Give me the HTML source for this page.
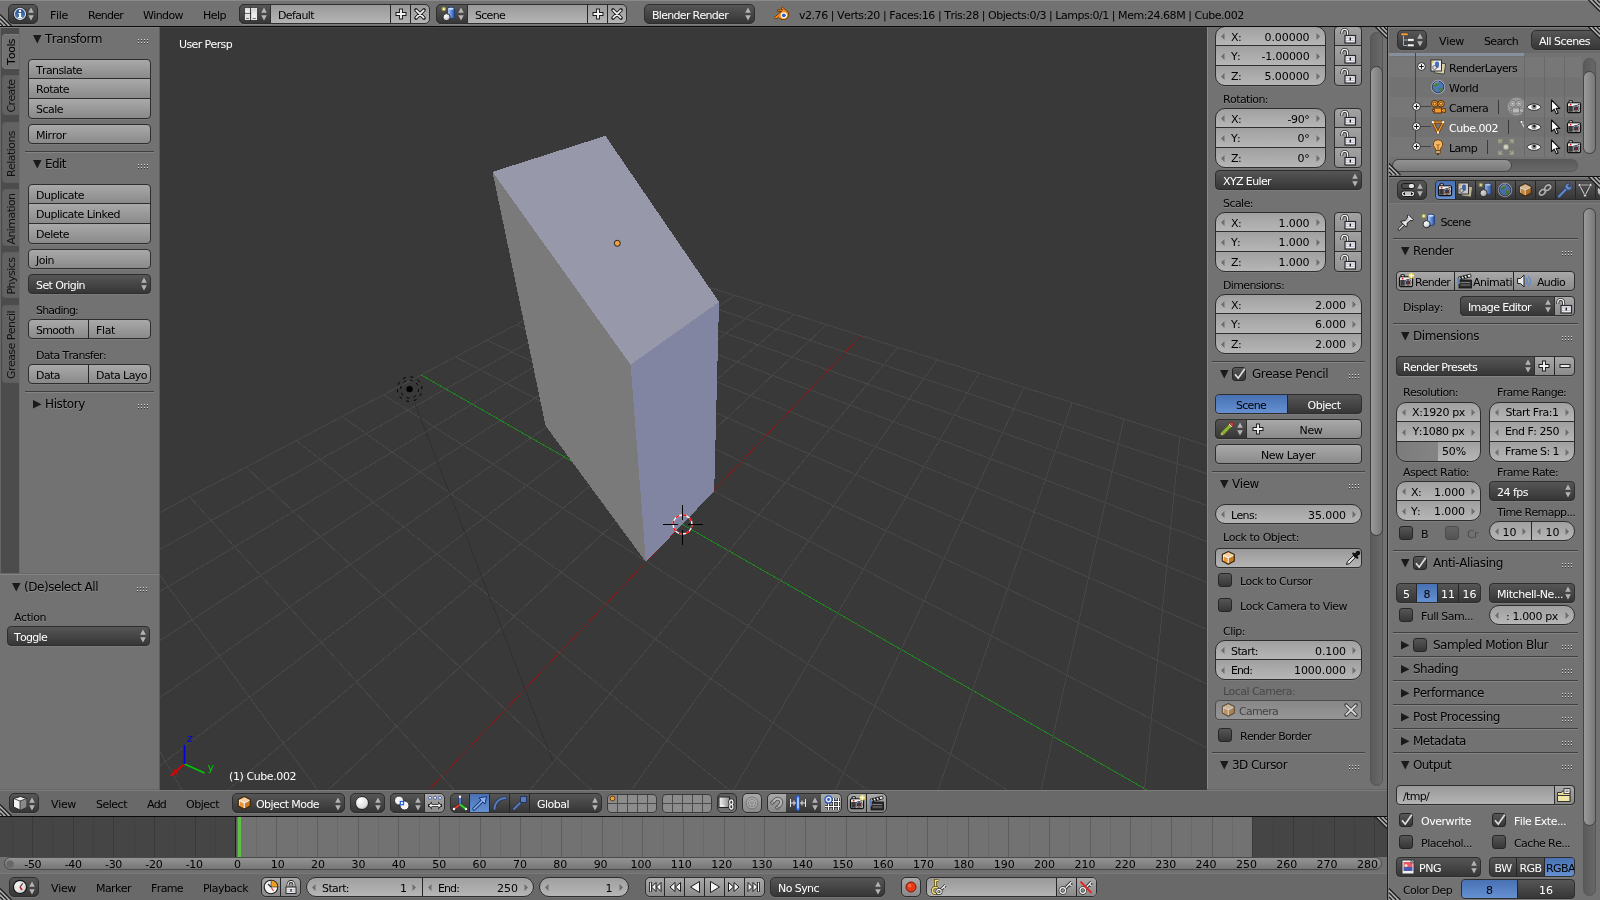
<!DOCTYPE html>
<html lang="en"><head><meta charset="utf-8"><title>Blender</title><style>
*{box-sizing:border-box;margin:0;padding:0}
html,body{width:1600px;height:900px;overflow:hidden;background:#727272}
body{position:relative;font-family:"DejaVu Sans","Liberation Sans",sans-serif;font-size:11px;color:#000;line-height:20px;font-kerning:none;font-variant-ligatures:none}
.a{position:absolute}
.t{position:absolute;white-space:nowrap;line-height:20px;height:20px}
.w{color:#fff}
.ts{text-shadow:0 1px 0 rgba(255,255,255,.18)}
.pt{font-size:12px}
.b{position:absolute;border:1px solid #2e2e2e;border-radius:4px;overflow:hidden;box-shadow:0 1px 0 rgba(255,255,255,.07)}
.tool{background:linear-gradient(#a9a9a9,#8a8a8a)}
.menu{background:linear-gradient(#565656,#363636);color:#fff}
.num{background:linear-gradient(#a0a0a0,#b6b6b6)}
.txt{background:linear-gradient(#999,#b4b4b4)}
.rad{background:linear-gradient(#565656,#363636);color:#fff}
.sel{background:linear-gradient(#4771b3,#6590d2);color:#000}
.togsel{background:linear-gradient(#8a8a8a,#a8a8a8)}
.tog{background:linear-gradient(#a2a2a2,#909090)}
.chk{position:absolute;width:14px;height:14px;border:1px solid #262626;border-radius:3px;background:linear-gradient(#565656,#363636)}
.sep{position:absolute;height:1px;background:#5f5f5f;border-bottom:0}
svg{position:absolute;overflow:visible}
#wrap{position:absolute;left:0;top:0;width:1600px;height:900px;overflow:hidden;will-change:transform}
</style></head><body><div id="wrap">
<div class="a" style="left:0px;top:0px;width:1600px;height:26px;background:#727272;"></div>
<div class="a" style="left:0px;top:0px;width:1600px;height:1px;background:#8a8a8a;"></div>
<div class="a" style="left:0px;top:26px;width:1600px;height:1px;background:#0a0a0a;"></div>
<div class="a" style="left:0px;top:27px;width:160px;height:763px;background:#727272;"></div>
<div class="a" style="left:0px;top:27px;width:160px;height:1px;background:#808080;"></div>
<div class="a" style="left:0px;top:28px;width:19px;height:546px;background:#4c4c4c;"></div>
<div class="a" style="left:0px;top:28px;width:1px;height:546px;background:#666;"></div>
<div class="a" style="left:1207px;top:27px;width:181px;height:762px;background:#727272;"></div>
<div class="a" style="left:1387px;top:27px;width:2px;height:873px;background:#1e1e1e;"></div>
<div class="a" style="left:1388px;top:27px;width:1px;height:873px;background:#838383;"></div>
<div class="a" style="left:0px;top:789px;width:1387px;height:1px;background:#666;"></div>
<div class="a" style="left:0px;top:790px;width:1387px;height:26px;background:#696969;"></div>
<div class="a" style="left:0px;top:790px;width:1387px;height:1px;background:#7c7c7c;"></div>
<div class="a" style="left:0px;top:816px;width:1387px;height:1px;background:#0a0a0a;"></div>
<div class="a" style="left:0px;top:817px;width:1387px;height:58px;background:#727272;"></div>
<div class="a" style="left:1389px;top:27px;width:211px;height:148px;background:#727272;"></div>
<div class="a" style="left:1389px;top:176px;width:211px;height:1px;background:#111;"></div>
<div class="a" style="left:1389px;top:177px;width:211px;height:723px;background:#727272;"></div>
<div class="b menu" style="left:8px;top:4px;width:30px;height:20px;border-radius:5px;"></div>
<svg style="left:12px;top:6px" width="16" height="16" viewBox="0 0 16 16"><defs><linearGradient id="ig" x1="0" y1="0" x2="0" y2="1"><stop offset="0" stop-color="#234a86"/><stop offset="1" stop-color="#5c86bc"/></linearGradient></defs><circle cx="8" cy="8" r="6.800" fill="#1c1c1c"/><circle cx="8" cy="8" r="5.600" fill="url(#ig)" stroke="#d4dcea" stroke-width="1.100"/><circle cx="8" cy="4.900" r="1.200" fill="#fff"/><path d="M6.300 7h2.800v4h1v1.200H6v-1.200h1.100V8.100H6.300z" fill="#fff"/></svg>
<svg style="left:26.5px;top:7px" width="8" height="14" viewBox="0 0 8 14"><path d="M4 .500 L6.800 5.800 L1.200 5.800Z M4 13.400 L6.800 8.200 L1.200 8.200Z" fill="#b4b4b4"/></svg>
<span class="t " style="top:5.5px;letter-spacing:-0.30px;left:50px;">File</span>
<span class="t " style="top:5.5px;letter-spacing:-0.78px;left:88px;">Render</span>
<span class="t " style="top:5.5px;letter-spacing:-0.60px;left:143px;">Window</span>
<span class="t " style="top:5.5px;letter-spacing:-0.52px;left:203px;">Help</span>
<div class="b txt" style="left:239px;top:4px;width:191px;height:20px;border-radius:5px;"></div>
<div class="b menu" style="left:239px;top:4px;width:32px;height:20px;border-radius:5px 0 0 5px;"></div>
<svg style="left:244px;top:7px" width="14" height="14" viewBox="0 0 14 14"><defs><linearGradient id="ssg" x1="0" y1="0" x2="0" y2="1"><stop offset="0" stop-color="#d2d2d2"/><stop offset="1" stop-color="#fff"/></linearGradient></defs><rect x=".3" y=".3" width="13.400" height="13.600" rx="1" fill="#1e1e1e"/><rect x="1.200" y="1.200" width="4.600" height="4.300" fill="url(#ssg)" stroke="#fff" stroke-width=".7"/><rect x="1.200" y="7" width="4.600" height="5.800" fill="url(#ssg)" stroke="#fff" stroke-width=".7"/><rect x="7.600" y="1.200" width="5.200" height="11.600" fill="url(#ssg)" stroke="#fff" stroke-width=".7"/><path d="M2 11.400h3M8.500 11.400h3.400" stroke="#444" stroke-width=".8"/></svg>
<svg style="left:259.5px;top:7px" width="8" height="14" viewBox="0 0 8 14"><path d="M4 .500 L6.800 5.800 L1.200 5.800Z M4 13.400 L6.800 8.200 L1.200 8.200Z" fill="#b4b4b4"/></svg>
<span class="t " style="top:5.5px;letter-spacing:-0.60px;left:278px;">Default</span>
<div class="a" style="left:390px;top:5px;width:1px;height:18px;background:#262626;"></div>
<div class="a" style="left:410px;top:5px;width:1px;height:18px;background:#262626;"></div>
<svg style="left:394px;top:7px" width="14" height="14" viewBox="0 0 14 14"><path d="M7 1.500v11M1.500 7h11" stroke="#1a1a1a" stroke-width="3.800"/><path d="M7 2.500v9M2.500 7h9" stroke="#f4f4f4" stroke-width="1.900"/></svg>
<svg style="left:413px;top:7px" width="14" height="14" viewBox="0 0 14 14"><path d="M3 3l8 8M11 3L3 11" stroke="#1a1a1a" stroke-width="3.600" stroke-linecap="round"/><path d="M3.300 3.300l7.400 7.400M10.700 3.300l-7.400 7.400" stroke="#f4f4f4" stroke-width="1.700" stroke-linecap="round"/></svg>
<div class="b txt" style="left:436px;top:4px;width:191px;height:20px;border-radius:5px;"></div>
<div class="b menu" style="left:436px;top:4px;width:32px;height:20px;border-radius:5px 0 0 5px;"></div>
<svg style="left:440px;top:6px" width="16" height="16" viewBox="0 0 16 16"><defs><radialGradient id="scs" cx=".35" cy=".3" r=".8"><stop offset="0" stop-color="#fff"/><stop offset=".6" stop-color="#d8d8d8"/><stop offset="1" stop-color="#777"/></radialGradient><linearGradient id="scc" x1="0" y1="0" x2="1" y2="0"><stop offset="0" stop-color="#c4dafa"/><stop offset=".45" stop-color="#6a98e4"/><stop offset="1" stop-color="#2c55a8"/></linearGradient></defs><circle cx="3.800" cy="3" r="2.300" fill="#c8c040" opacity=".7"/><circle cx="3.800" cy="3" r="1.100" fill="#fffbe0"/><path d="M7.600 2.700 a3.400 1.500 0 0 1 6.800 0 v8.300 a3.400 1.500 0 0 1 -6.800 0z" fill="url(#scc)" stroke="#1c3a7a" stroke-width=".9"/><ellipse cx="11" cy="2.800" rx="2.700" ry="1" fill="#cfe0fa"/><circle cx="6.600" cy="11.200" r="3.600" fill="url(#scs)" stroke="#222" stroke-width=".9"/></svg>
<svg style="left:456.5px;top:7px" width="8" height="14" viewBox="0 0 8 14"><path d="M4 .500 L6.800 5.800 L1.200 5.800Z M4 13.400 L6.800 8.200 L1.200 8.200Z" fill="#b4b4b4"/></svg>
<span class="t " style="top:5.5px;letter-spacing:-0.71px;left:475px;">Scene</span>
<div class="a" style="left:587px;top:5px;width:1px;height:18px;background:#262626;"></div>
<div class="a" style="left:607px;top:5px;width:1px;height:18px;background:#262626;"></div>
<svg style="left:591px;top:7px" width="14" height="14" viewBox="0 0 14 14"><path d="M7 1.500v11M1.500 7h11" stroke="#1a1a1a" stroke-width="3.800"/><path d="M7 2.500v9M2.500 7h9" stroke="#f4f4f4" stroke-width="1.900"/></svg>
<svg style="left:610px;top:7px" width="14" height="14" viewBox="0 0 14 14"><path d="M3 3l8 8M11 3L3 11" stroke="#1a1a1a" stroke-width="3.600" stroke-linecap="round"/><path d="M3.300 3.300l7.400 7.400M10.700 3.300l-7.400 7.400" stroke="#f4f4f4" stroke-width="1.700" stroke-linecap="round"/></svg>
<div class="b menu" style="left:644px;top:4px;width:111px;height:20px;border-radius:5px;"></div>
<span class="t w" style="top:5.5px;letter-spacing:-0.70px;left:652px;">Blender Render</span>
<svg style="left:743.5px;top:7px" width="8" height="14" viewBox="0 0 8 14"><path d="M4 .500 L6.800 5.800 L1.200 5.800Z M4 13.400 L6.800 8.200 L1.200 8.200Z" fill="#b4b4b4"/></svg>
<svg style="left:773px;top:6px" width="18" height="16" viewBox="0 0 18 16"><path d="M1 11.500 L8.5 5.5 L4.5 5.5 L4.5 3.8 L9.8 3.8 L8 2.2 L9.3 1 L15 6 A5.2 4.6 0 1 1 5.3 11.2 L3 13z" fill="#f08a1c" stroke="#6a3800" stroke-width=".9"/><circle cx="10.8" cy="9.3" r="3.1" fill="#fff"/><circle cx="10.8" cy="9.3" r="1.9" fill="#2a63b8"/></svg>
<span class="t " style="top:5.5px;letter-spacing:-0.46px;left:799px;">v2.76 | Verts:20 | Faces:16 | Tris:28 | Objects:0/3 | Lamps:0/1 | Mem:24.68M | Cube.002</span>
<div class="a" style="left:2px;top:34px;width:18px;height:35px;background:#727272;border:1px solid #7c7c7c;border-right:0;border-radius:4px 0 0 4px"></div>
<span class="t" style="left:-88px;top:41.5px;width:200px;text-align:center;transform:rotate(-90deg);transform-origin:50% 50%;color:#000;letter-spacing:-0.59px">Tools</span>
<div class="a" style="left:2px;top:75px;width:17px;height:40px;background:#626262;border:1px solid #5e5e5e;border-right:0;border-radius:4px 0 0 4px"></div>
<span class="t" style="left:-88px;top:86px;width:200px;text-align:center;transform:rotate(-90deg);transform-origin:50% 50%;color:#111;letter-spacing:-0.63px">Create</span>
<div class="a" style="left:2px;top:122px;width:17px;height:61px;background:#626262;border:1px solid #5e5e5e;border-right:0;border-radius:4px 0 0 4px"></div>
<span class="t" style="left:-88px;top:143.5px;width:200px;text-align:center;transform:rotate(-90deg);transform-origin:50% 50%;color:#111;letter-spacing:-0.56px">Relations</span>
<div class="a" style="left:2px;top:189px;width:17px;height:57px;background:#626262;border:1px solid #5e5e5e;border-right:0;border-radius:4px 0 0 4px"></div>
<span class="t" style="left:-88px;top:208.5px;width:200px;text-align:center;transform:rotate(-90deg);transform-origin:50% 50%;color:#111;letter-spacing:-0.56px">Animation</span>
<div class="a" style="left:2px;top:252px;width:17px;height:46px;background:#626262;border:1px solid #5e5e5e;border-right:0;border-radius:4px 0 0 4px"></div>
<span class="t" style="left:-88px;top:266px;width:200px;text-align:center;transform:rotate(-90deg);transform-origin:50% 50%;color:#111;letter-spacing:-0.53px">Physics</span>
<div class="a" style="left:2px;top:305px;width:17px;height:78px;background:#626262;border:1px solid #5e5e5e;border-right:0;border-radius:4px 0 0 4px"></div>
<span class="t" style="left:-88px;top:335px;width:200px;text-align:center;transform:rotate(-90deg);transform-origin:50% 50%;color:#111;letter-spacing:-0.54px">Grease Pencil</span>
<div class="a" style="left:19px;top:28px;width:1px;height:546px;background:#6a6a6a;"></div>
<svg style="left:33px;top:35px" width="9" height="9" viewBox="0 0 9 9"><path d="M0 0 L8.5 0 L4.25 8.5Z" fill="#1a1a1a"/></svg>
<span class="t pt ts" style="top:29px;letter-spacing:-0.52px;left:45px;">Transform</span>
<svg style="left:138px;top:39px" width="11" height="6" viewBox="0 0 11 6"><rect x="0" y="0" width="1" height="1" fill="#d8d8d8"/><rect x="0" y="1" width="1" height="1" fill="#3a3a3a"/><rect x="0" y="3" width="1" height="1" fill="#d8d8d8"/><rect x="0" y="4" width="1" height="1" fill="#3a3a3a"/><rect x="3" y="0" width="1" height="1" fill="#d8d8d8"/><rect x="3" y="1" width="1" height="1" fill="#3a3a3a"/><rect x="3" y="3" width="1" height="1" fill="#d8d8d8"/><rect x="3" y="4" width="1" height="1" fill="#3a3a3a"/><rect x="6" y="0" width="1" height="1" fill="#d8d8d8"/><rect x="6" y="1" width="1" height="1" fill="#3a3a3a"/><rect x="6" y="3" width="1" height="1" fill="#d8d8d8"/><rect x="6" y="4" width="1" height="1" fill="#3a3a3a"/><rect x="9" y="0" width="1" height="1" fill="#d8d8d8"/><rect x="9" y="1" width="1" height="1" fill="#3a3a3a"/><rect x="9" y="3" width="1" height="1" fill="#d8d8d8"/><rect x="9" y="4" width="1" height="1" fill="#3a3a3a"/></svg>
<div class="b tool" style="left:28px;top:59px;width:123px;height:20px;border-radius:4px 4px 0 0;"></div>
<span class="t " style="top:60.5px;letter-spacing:-0.62px;left:36px;">Translate</span>
<div class="b tool" style="left:28px;top:78px;width:123px;height:21px;border-radius:0 0 0 0;"></div>
<span class="t " style="top:79.5px;letter-spacing:-0.58px;left:36px;">Rotate</span>
<div class="b tool" style="left:28px;top:98px;width:123px;height:21px;border-radius:0 0 4px 4px;"></div>
<span class="t " style="top:99.5px;letter-spacing:-0.52px;left:36px;">Scale</span>
<div class="b tool" style="left:28px;top:124px;width:123px;height:20px;border-radius:4px 4px 4px 4px;"></div>
<span class="t " style="top:125.5px;letter-spacing:-0.47px;left:36px;">Mirror</span>
<div class="a" style="left:25px;top:151px;width:129px;height:1px;background:#404040;"></div>
<div class="a" style="left:25px;top:152px;width:129px;height:1px;background:#858585;"></div>
<svg style="left:33px;top:160px" width="9" height="9" viewBox="0 0 9 9"><path d="M0 0 L8.5 0 L4.25 8.5Z" fill="#1a1a1a"/></svg>
<span class="t pt ts" style="top:154px;letter-spacing:-0.56px;left:45px;">Edit</span>
<svg style="left:138px;top:164px" width="11" height="6" viewBox="0 0 11 6"><rect x="0" y="0" width="1" height="1" fill="#d8d8d8"/><rect x="0" y="1" width="1" height="1" fill="#3a3a3a"/><rect x="0" y="3" width="1" height="1" fill="#d8d8d8"/><rect x="0" y="4" width="1" height="1" fill="#3a3a3a"/><rect x="3" y="0" width="1" height="1" fill="#d8d8d8"/><rect x="3" y="1" width="1" height="1" fill="#3a3a3a"/><rect x="3" y="3" width="1" height="1" fill="#d8d8d8"/><rect x="3" y="4" width="1" height="1" fill="#3a3a3a"/><rect x="6" y="0" width="1" height="1" fill="#d8d8d8"/><rect x="6" y="1" width="1" height="1" fill="#3a3a3a"/><rect x="6" y="3" width="1" height="1" fill="#d8d8d8"/><rect x="6" y="4" width="1" height="1" fill="#3a3a3a"/><rect x="9" y="0" width="1" height="1" fill="#d8d8d8"/><rect x="9" y="1" width="1" height="1" fill="#3a3a3a"/><rect x="9" y="3" width="1" height="1" fill="#d8d8d8"/><rect x="9" y="4" width="1" height="1" fill="#3a3a3a"/></svg>
<div class="b tool" style="left:28px;top:184px;width:123px;height:20px;border-radius:4px 4px 0 0;"></div>
<span class="t " style="top:185.5px;letter-spacing:-0.49px;left:36px;">Duplicate</span>
<div class="b tool" style="left:28px;top:203px;width:123px;height:21px;border-radius:0 0 0 0;"></div>
<span class="t " style="top:204.5px;letter-spacing:-0.51px;left:36px;">Duplicate Linked</span>
<div class="b tool" style="left:28px;top:223px;width:123px;height:21px;border-radius:0 0 4px 4px;"></div>
<span class="t " style="top:224.5px;letter-spacing:-0.52px;left:36px;">Delete</span>
<div class="b tool" style="left:28px;top:249px;width:123px;height:20px;border-radius:4px 4px 4px 4px;"></div>
<span class="t " style="top:250.5px;letter-spacing:-0.50px;left:36px;">Join</span>
<div class="b menu" style="left:28px;top:274px;width:123px;height:20px;border-radius:4px 4px 4px 4px;"></div>
<span class="t w" style="top:275.5px;letter-spacing:-0.58px;left:36px;">Set Origin</span>
<svg style="left:139.5px;top:277px" width="8" height="14" viewBox="0 0 8 14"><path d="M4 .500 L6.800 5.800 L1.200 5.800Z M4 13.400 L6.800 8.200 L1.200 8.200Z" fill="#b4b4b4"/></svg>
<span class="t ts" style="top:301px;letter-spacing:-0.80px;left:36px;">Shading:</span>
<div class="b tool" style="left:28px;top:319px;width:123px;height:20px;"></div>
<div class="a" style="left:88px;top:320px;width:1px;height:18px;background:#262626;"></div>
<span class="t " style="top:320.5px;letter-spacing:-0.74px;left:36px;">Smooth</span>
<span class="t " style="top:320.5px;letter-spacing:-0.36px;left:96px;">Flat</span>
<span class="t ts" style="top:346px;letter-spacing:-0.67px;left:36px;">Data Transfer:</span>
<div class="b tool" style="left:28px;top:364px;width:123px;height:20px;"></div>
<div class="a" style="left:88px;top:365px;width:1px;height:18px;background:#262626;"></div>
<span class="t " style="top:365.5px;letter-spacing:-0.57px;left:36px;">Data</span>
<span class="t " style="top:365.5px;letter-spacing:-0.54px;left:96px;width:54px;overflow:hidden;">Data Layo</span>
<div class="a" style="left:25px;top:391px;width:129px;height:1px;background:#404040;"></div>
<div class="a" style="left:25px;top:392px;width:129px;height:1px;background:#858585;"></div>
<svg style="left:32.5px;top:400px" width="9" height="9" viewBox="0 0 9 9"><path d="M0 0 L8.500 4.250 L0 8.500Z" fill="#1a1a1a"/></svg>
<span class="t pt ts" style="top:394px;letter-spacing:-0.38px;left:45px;">History</span>
<svg style="left:138px;top:404px" width="11" height="6" viewBox="0 0 11 6"><rect x="0" y="0" width="1" height="1" fill="#d8d8d8"/><rect x="0" y="1" width="1" height="1" fill="#3a3a3a"/><rect x="0" y="3" width="1" height="1" fill="#d8d8d8"/><rect x="0" y="4" width="1" height="1" fill="#3a3a3a"/><rect x="3" y="0" width="1" height="1" fill="#d8d8d8"/><rect x="3" y="1" width="1" height="1" fill="#3a3a3a"/><rect x="3" y="3" width="1" height="1" fill="#d8d8d8"/><rect x="3" y="4" width="1" height="1" fill="#3a3a3a"/><rect x="6" y="0" width="1" height="1" fill="#d8d8d8"/><rect x="6" y="1" width="1" height="1" fill="#3a3a3a"/><rect x="6" y="3" width="1" height="1" fill="#d8d8d8"/><rect x="6" y="4" width="1" height="1" fill="#3a3a3a"/><rect x="9" y="0" width="1" height="1" fill="#d8d8d8"/><rect x="9" y="1" width="1" height="1" fill="#3a3a3a"/><rect x="9" y="3" width="1" height="1" fill="#d8d8d8"/><rect x="9" y="4" width="1" height="1" fill="#3a3a3a"/></svg>
<div class="a" style="left:0px;top:573px;width:159px;height:1px;background:#676767;"></div>
<div class="a" style="left:0px;top:574px;width:159px;height:1px;background:#858585;"></div>
<svg style="left:12px;top:583px" width="9" height="9" viewBox="0 0 9 9"><path d="M0 0 L8.5 0 L4.25 8.5Z" fill="#1a1a1a"/></svg>
<span class="t pt ts" style="top:577px;letter-spacing:-0.45px;left:24px;">(De)select All</span>
<svg style="left:137px;top:587px" width="11" height="6" viewBox="0 0 11 6"><rect x="0" y="0" width="1" height="1" fill="#d8d8d8"/><rect x="0" y="1" width="1" height="1" fill="#3a3a3a"/><rect x="0" y="3" width="1" height="1" fill="#d8d8d8"/><rect x="0" y="4" width="1" height="1" fill="#3a3a3a"/><rect x="3" y="0" width="1" height="1" fill="#d8d8d8"/><rect x="3" y="1" width="1" height="1" fill="#3a3a3a"/><rect x="3" y="3" width="1" height="1" fill="#d8d8d8"/><rect x="3" y="4" width="1" height="1" fill="#3a3a3a"/><rect x="6" y="0" width="1" height="1" fill="#d8d8d8"/><rect x="6" y="1" width="1" height="1" fill="#3a3a3a"/><rect x="6" y="3" width="1" height="1" fill="#d8d8d8"/><rect x="6" y="4" width="1" height="1" fill="#3a3a3a"/><rect x="9" y="0" width="1" height="1" fill="#d8d8d8"/><rect x="9" y="1" width="1" height="1" fill="#3a3a3a"/><rect x="9" y="3" width="1" height="1" fill="#d8d8d8"/><rect x="9" y="4" width="1" height="1" fill="#3a3a3a"/></svg>
<span class="t ts" style="top:608px;letter-spacing:-0.44px;left:14px;">Action</span>
<div class="b menu" style="left:7px;top:626px;width:143px;height:20px;"></div>
<span class="t w" style="top:627.5px;letter-spacing:-0.71px;left:14px;">Toggle</span>
<svg style="left:139px;top:629px" width="8" height="14" viewBox="0 0 8 14"><path d="M4 .500 L6.800 5.800 L1.200 5.800Z M4 13.400 L6.800 8.200 L1.200 8.200Z" fill="#b4b4b4"/></svg>
<div class="a" style="left:159px;top:27px;width:1px;height:763px;background:#5d5d5d;"></div>
<svg style="left:160px;top:27px;overflow:hidden;font-family:'DejaVu Sans','Liberation Sans',sans-serif" width="1047" height="763" viewBox="0 0 1047 763"><rect width="1047" height="763" fill="#393939"/><rect width="1047" height="1" fill="#464646"/><g stroke-width="1" shape-rendering="crispEdges"><line x1="473.2" y1="236.2" x2="1080.4" y2="429.1" stroke="#464646"/><line x1="473.2" y1="236.2" x2="-185.9" y2="583.3" stroke="#464646"/><line x1="452.9" y1="246.8" x2="1081.0" y2="458.3" stroke="#464646"/><line x1="496.6" y1="243.6" x2="-171.7" y2="618.7" stroke="#464646"/><line x1="431.3" y1="258.2" x2="1081.8" y2="491.1" stroke="#464646"/><line x1="521.2" y1="251.4" x2="-155.7" y2="658.1" stroke="#464646"/><line x1="408.1" y1="270.4" x2="1082.7" y2="528.2" stroke="#464646"/><line x1="547.2" y1="259.7" x2="-137.8" y2="702.5" stroke="#464646"/><line x1="383.1" y1="283.6" x2="1083.6" y2="570.5" stroke="#464646"/><line x1="574.6" y1="268.4" x2="-117.4" y2="752.8" stroke="#464646"/><line x1="356.2" y1="297.8" x2="1084.7" y2="619.2" stroke="#464646"/><line x1="603.6" y1="277.6" x2="-94.2" y2="810.3" stroke="#464646"/><line x1="327.1" y1="313.1" x2="1086.0" y2="675.7" stroke="#464646"/><line x1="634.2" y1="287.3" x2="-67.5" y2="876.5" stroke="#464646"/><line x1="295.4" y1="329.8" x2="1087.6" y2="742.2" stroke="#464646"/><line x1="666.7" y1="297.7" x2="-36.2" y2="953.7" stroke="#464646"/><line x1="261.0" y1="347.9" x2="1089.4" y2="821.6" stroke="#1e861e"/><line x1="701.3" y1="308.6" x2="0.6" y2="1044.9" stroke="#801c1c"/><line x1="223.4" y1="367.7" x2="1091.6" y2="918.0" stroke="#464646"/><line x1="738.0" y1="320.3" x2="44.8" y2="1154.2" stroke="#464646"/><line x1="182.0" y1="389.5" x2="1094.3" y2="1037.6" stroke="#464646"/><line x1="777.2" y1="332.8" x2="98.7" y2="1287.6" stroke="#464646"/><line x1="136.5" y1="413.5" x2="1097.8" y2="1189.8" stroke="#464646"/><line x1="819.1" y1="346.1" x2="165.9" y2="1454.0" stroke="#464646"/><line x1="86.0" y1="440.1" x2="1102.4" y2="1390.2" stroke="#464646"/><line x1="863.9" y1="360.3" x2="252.2" y2="1667.6" stroke="#464646"/><line x1="29.7" y1="469.8" x2="1108.8" y2="1665.8" stroke="#464646"/><line x1="912.0" y1="375.6" x2="367.0" y2="1951.6" stroke="#464646"/><line x1="-33.5" y1="503.0" x2="1118.0" y2="2068.8" stroke="#464646"/><line x1="963.9" y1="392.1" x2="527.1" y2="2347.7" stroke="#464646"/><line x1="-104.8" y1="540.6" x2="1132.9" y2="2714.3" stroke="#464646"/><line x1="1019.8" y1="409.8" x2="765.9" y2="2938.6" stroke="#464646"/><line x1="-185.9" y1="583.3" x2="1160.4" y2="3914.9" stroke="#464646"/><line x1="1080.4" y1="429.1" x2="1160.4" y2="3914.9" stroke="#464646"/></g><line x1="254.75" y1="375.5" x2="393.2" y2="735.5" stroke="#303030" stroke-width="1" shape-rendering="crispEdges"/><g shape-rendering="crispEdges"><polygon points="332.5,144.9 470.6,337.7 485.9,535.0 385.6,398.8" fill="#7a7a7a"/><polygon points="470.6,337.7 559.0,274.9 554.2,464.2 485.9,535.0" fill="#8285a1"/><polygon points="332.5,144.9 445.4,108.8 559.0,274.9 470.6,337.7" fill="#9798aa"/></g><circle cx="457.3" cy="216.3" r="3" fill="#f0a040" stroke="#222" stroke-width="1"/><circle cx="249.6" cy="362.1" r="3.2" fill="#000"/><circle cx="249.6" cy="362.1" r="9" fill="none" stroke="#000" stroke-width=".9" stroke-dasharray="3 4.07"/><circle cx="249.6" cy="362.1" r="12.3" fill="none" stroke="#000" stroke-width=".9" stroke-dasharray="3 4.73" transform="rotate(20 249.6 362.1)"/><circle cx="522.5" cy="497.5" r="9.5" fill="none" stroke="#fff" stroke-width="1.3"/><circle cx="522.5" cy="497.5" r="9.5" fill="none" stroke="#f00" stroke-width="1.3" stroke-dasharray="3.73 3.73"/><path d="M522.5 477.5v15M522.5 502.5v15M502.5 497.5h15M527.5 497.5h15" stroke="#000" stroke-width="1" shape-rendering="crispEdges"/><g stroke-width="1.7"><line x1="24.5" y1="737" x2="10.5" y2="749" stroke="#e00000"/><line x1="24.5" y1="737" x2="44.5" y2="746" stroke="#00c800"/><line x1="24.5" y1="737" x2="24.5" y2="718" stroke="#0000e0"/></g><text x="12.5" y="748" font-size="11" fill="#e00000">x</text><text x="47.5" y="744" font-size="11" fill="#00c800">y</text><text x="27" y="715" font-size="11" fill="#0000e0">z</text></svg>
<span class="t w" style="top:35px;letter-spacing:-0.62px;left:179px;">User Persp</span>
<span class="t w" style="top:767px;letter-spacing:-0.41px;left:229px;">(1) Cube.002</span>
<div class="b num" style="left:1215px;top:26px;width:111px;height:20px;border-radius:10px 10px 0 0;"></div>
<svg style="left:1221px;top:32.5px" width="4" height="7" viewBox="0 0 4 7"><path d="M3.5 0 L3.5 7 L0 3.5Z" fill="#6e6e6e"/></svg>
<svg style="left:1316px;top:32.5px" width="4" height="7" viewBox="0 0 4 7"><path d="M0.5 0 L0.5 7 L4 3.5Z" fill="#6e6e6e"/></svg>
<span class="t " style="top:27.5px;letter-spacing:-0.62px;left:1231px;">X:</span>
<span class="t n" style="top:27.5px;letter-spacing:-0.07px;right:290.5px;text-align:right;">0.00000</span>
<div class="b tog" style="left:1334px;top:26px;width:28px;height:20px;border-radius:4px 4px 0 0;"></div>
<svg style="left:1340px;top:28px" width="16" height="16" viewBox="0 0 16 16"><path d="M1.800 6 V4.300 A2.900 2.900 0 0 1 7.600 4.300 V8" fill="none" stroke="#2a2a2a" stroke-width="3"/><path d="M1.800 5.700 V4.300 A2.900 2.900 0 0 1 7.600 4.300 V8" fill="none" stroke="#f4f4f4" stroke-width="1.300"/><rect x="5" y="7.500" width="10.500" height="7.500" fill="#ececf0" stroke="#2a2a2a" stroke-width="1.200"/><path d="M6 10h8.500M6 12.500h8.500" stroke="#b4b8c6" stroke-width=".9"/><rect x="9.600" y="9.600" width="1.400" height="2.800" fill="#1a1a1a"/></svg>
<div class="b num" style="left:1215px;top:45px;width:111px;height:21px;border-radius:0 0 0 0;"></div>
<svg style="left:1221px;top:52.5px" width="4" height="7" viewBox="0 0 4 7"><path d="M3.5 0 L3.5 7 L0 3.5Z" fill="#6e6e6e"/></svg>
<svg style="left:1316px;top:52.5px" width="4" height="7" viewBox="0 0 4 7"><path d="M0.5 0 L0.5 7 L4 3.5Z" fill="#6e6e6e"/></svg>
<span class="t " style="top:46.5px;letter-spacing:-0.71px;left:1231px;">Y:</span>
<span class="t n" style="top:46.5px;letter-spacing:-0.18px;right:290.5px;text-align:right;">-1.00000</span>
<div class="b tog" style="left:1334px;top:45px;width:28px;height:21px;border-radius:0 0 0 0;"></div>
<svg style="left:1340px;top:48px" width="16" height="16" viewBox="0 0 16 16"><path d="M1.800 6 V4.300 A2.900 2.900 0 0 1 7.600 4.300 V8" fill="none" stroke="#2a2a2a" stroke-width="3"/><path d="M1.800 5.700 V4.300 A2.900 2.900 0 0 1 7.600 4.300 V8" fill="none" stroke="#f4f4f4" stroke-width="1.300"/><rect x="5" y="7.500" width="10.500" height="7.500" fill="#ececf0" stroke="#2a2a2a" stroke-width="1.200"/><path d="M6 10h8.500M6 12.500h8.500" stroke="#b4b8c6" stroke-width=".9"/><rect x="9.600" y="9.600" width="1.400" height="2.800" fill="#1a1a1a"/></svg>
<div class="b num" style="left:1215px;top:65px;width:111px;height:21px;border-radius:0 0 10px 10px;"></div>
<svg style="left:1221px;top:72.5px" width="4" height="7" viewBox="0 0 4 7"><path d="M3.5 0 L3.5 7 L0 3.5Z" fill="#6e6e6e"/></svg>
<svg style="left:1316px;top:72.5px" width="4" height="7" viewBox="0 0 4 7"><path d="M0.5 0 L0.5 7 L4 3.5Z" fill="#6e6e6e"/></svg>
<span class="t " style="top:66.5px;letter-spacing:-0.62px;left:1231px;">Z:</span>
<span class="t n" style="top:66.5px;letter-spacing:-0.07px;right:290.5px;text-align:right;">5.00000</span>
<div class="b tog" style="left:1334px;top:65px;width:28px;height:21px;border-radius:0 0 4px 4px;"></div>
<svg style="left:1340px;top:68px" width="16" height="16" viewBox="0 0 16 16"><path d="M1.800 6 V4.300 A2.900 2.900 0 0 1 7.600 4.300 V8" fill="none" stroke="#2a2a2a" stroke-width="3"/><path d="M1.800 5.700 V4.300 A2.900 2.900 0 0 1 7.600 4.300 V8" fill="none" stroke="#f4f4f4" stroke-width="1.300"/><rect x="5" y="7.500" width="10.500" height="7.500" fill="#ececf0" stroke="#2a2a2a" stroke-width="1.200"/><path d="M6 10h8.500M6 12.500h8.500" stroke="#b4b8c6" stroke-width=".9"/><rect x="9.600" y="9.600" width="1.400" height="2.800" fill="#1a1a1a"/></svg>
<span class="t ts" style="top:90px;letter-spacing:-0.58px;left:1223px;">Rotation:</span>
<div class="b num" style="left:1215px;top:108px;width:111px;height:20px;border-radius:10px 10px 0 0;"></div>
<svg style="left:1221px;top:114.5px" width="4" height="7" viewBox="0 0 4 7"><path d="M3.5 0 L3.5 7 L0 3.5Z" fill="#6e6e6e"/></svg>
<svg style="left:1316px;top:114.5px" width="4" height="7" viewBox="0 0 4 7"><path d="M0.5 0 L0.5 7 L4 3.5Z" fill="#6e6e6e"/></svg>
<span class="t " style="top:109.5px;letter-spacing:-0.62px;left:1231px;">X:</span>
<span class="t n" style="top:109.5px;letter-spacing:-0.37px;right:290.5px;text-align:right;">-90°</span>
<div class="b tog" style="left:1334px;top:108px;width:28px;height:20px;border-radius:4px 4px 0 0;"></div>
<svg style="left:1340px;top:110px" width="16" height="16" viewBox="0 0 16 16"><path d="M1.800 6 V4.300 A2.900 2.900 0 0 1 7.600 4.300 V8" fill="none" stroke="#2a2a2a" stroke-width="3"/><path d="M1.800 5.700 V4.300 A2.900 2.900 0 0 1 7.600 4.300 V8" fill="none" stroke="#f4f4f4" stroke-width="1.300"/><rect x="5" y="7.500" width="10.500" height="7.500" fill="#ececf0" stroke="#2a2a2a" stroke-width="1.200"/><path d="M6 10h8.500M6 12.500h8.500" stroke="#b4b8c6" stroke-width=".9"/><rect x="9.600" y="9.600" width="1.400" height="2.800" fill="#1a1a1a"/></svg>
<div class="b num" style="left:1215px;top:127px;width:111px;height:21px;border-radius:0 0 0 0;"></div>
<svg style="left:1221px;top:134.5px" width="4" height="7" viewBox="0 0 4 7"><path d="M3.5 0 L3.5 7 L0 3.5Z" fill="#6e6e6e"/></svg>
<svg style="left:1316px;top:134.5px" width="4" height="7" viewBox="0 0 4 7"><path d="M0.5 0 L0.5 7 L4 3.5Z" fill="#6e6e6e"/></svg>
<span class="t " style="top:128.5px;letter-spacing:-0.71px;left:1231px;">Y:</span>
<span class="t n" style="top:128.5px;letter-spacing:-0.25px;right:290.5px;text-align:right;">0°</span>
<div class="b tog" style="left:1334px;top:127px;width:28px;height:21px;border-radius:0 0 0 0;"></div>
<svg style="left:1340px;top:130px" width="16" height="16" viewBox="0 0 16 16"><path d="M1.800 6 V4.300 A2.900 2.900 0 0 1 7.600 4.300 V8" fill="none" stroke="#2a2a2a" stroke-width="3"/><path d="M1.800 5.700 V4.300 A2.900 2.900 0 0 1 7.600 4.300 V8" fill="none" stroke="#f4f4f4" stroke-width="1.300"/><rect x="5" y="7.500" width="10.500" height="7.500" fill="#ececf0" stroke="#2a2a2a" stroke-width="1.200"/><path d="M6 10h8.500M6 12.500h8.500" stroke="#b4b8c6" stroke-width=".9"/><rect x="9.600" y="9.600" width="1.400" height="2.800" fill="#1a1a1a"/></svg>
<div class="b num" style="left:1215px;top:147px;width:111px;height:21px;border-radius:0 0 10px 10px;"></div>
<svg style="left:1221px;top:154.5px" width="4" height="7" viewBox="0 0 4 7"><path d="M3.5 0 L3.5 7 L0 3.5Z" fill="#6e6e6e"/></svg>
<svg style="left:1316px;top:154.5px" width="4" height="7" viewBox="0 0 4 7"><path d="M0.5 0 L0.5 7 L4 3.5Z" fill="#6e6e6e"/></svg>
<span class="t " style="top:148.5px;letter-spacing:-0.62px;left:1231px;">Z:</span>
<span class="t n" style="top:148.5px;letter-spacing:-0.25px;right:290.5px;text-align:right;">0°</span>
<div class="b tog" style="left:1334px;top:147px;width:28px;height:21px;border-radius:0 0 4px 4px;"></div>
<svg style="left:1340px;top:150px" width="16" height="16" viewBox="0 0 16 16"><path d="M1.800 6 V4.300 A2.900 2.900 0 0 1 7.600 4.300 V8" fill="none" stroke="#2a2a2a" stroke-width="3"/><path d="M1.800 5.700 V4.300 A2.900 2.900 0 0 1 7.600 4.300 V8" fill="none" stroke="#f4f4f4" stroke-width="1.300"/><rect x="5" y="7.500" width="10.500" height="7.500" fill="#ececf0" stroke="#2a2a2a" stroke-width="1.200"/><path d="M6 10h8.500M6 12.500h8.500" stroke="#b4b8c6" stroke-width=".9"/><rect x="9.600" y="9.600" width="1.400" height="2.800" fill="#1a1a1a"/></svg>
<div class="b menu" style="left:1215px;top:170px;width:147px;height:20px;"></div>
<span class="t w" style="top:171.5px;letter-spacing:-0.62px;left:1223px;">XYZ Euler</span>
<svg style="left:1350.5px;top:173px" width="8" height="14" viewBox="0 0 8 14"><path d="M4 .500 L6.800 5.800 L1.200 5.800Z M4 13.400 L6.800 8.200 L1.200 8.200Z" fill="#b4b4b4"/></svg>
<span class="t ts" style="top:194px;letter-spacing:-0.55px;left:1223px;">Scale:</span>
<div class="b num" style="left:1215px;top:212px;width:111px;height:20px;border-radius:10px 10px 0 0;"></div>
<svg style="left:1221px;top:218.5px" width="4" height="7" viewBox="0 0 4 7"><path d="M3.5 0 L3.5 7 L0 3.5Z" fill="#6e6e6e"/></svg>
<svg style="left:1316px;top:218.5px" width="4" height="7" viewBox="0 0 4 7"><path d="M0.5 0 L0.5 7 L4 3.5Z" fill="#6e6e6e"/></svg>
<span class="t " style="top:213.5px;letter-spacing:-0.62px;left:1231px;">X:</span>
<span class="t n" style="top:213.5px;letter-spacing:-0.10px;right:290.5px;text-align:right;">1.000</span>
<div class="b tog" style="left:1334px;top:212px;width:28px;height:20px;border-radius:4px 4px 0 0;"></div>
<svg style="left:1340px;top:214px" width="16" height="16" viewBox="0 0 16 16"><path d="M1.800 6 V4.300 A2.900 2.900 0 0 1 7.600 4.300 V8" fill="none" stroke="#2a2a2a" stroke-width="3"/><path d="M1.800 5.700 V4.300 A2.900 2.900 0 0 1 7.600 4.300 V8" fill="none" stroke="#f4f4f4" stroke-width="1.300"/><rect x="5" y="7.500" width="10.500" height="7.500" fill="#ececf0" stroke="#2a2a2a" stroke-width="1.200"/><path d="M6 10h8.500M6 12.500h8.500" stroke="#b4b8c6" stroke-width=".9"/><rect x="9.600" y="9.600" width="1.400" height="2.800" fill="#1a1a1a"/></svg>
<div class="b num" style="left:1215px;top:231px;width:111px;height:21px;border-radius:0 0 0 0;"></div>
<svg style="left:1221px;top:238.5px" width="4" height="7" viewBox="0 0 4 7"><path d="M3.5 0 L3.5 7 L0 3.5Z" fill="#6e6e6e"/></svg>
<svg style="left:1316px;top:238.5px" width="4" height="7" viewBox="0 0 4 7"><path d="M0.5 0 L0.5 7 L4 3.5Z" fill="#6e6e6e"/></svg>
<span class="t " style="top:232.5px;letter-spacing:-0.71px;left:1231px;">Y:</span>
<span class="t n" style="top:232.5px;letter-spacing:-0.10px;right:290.5px;text-align:right;">1.000</span>
<div class="b tog" style="left:1334px;top:231px;width:28px;height:21px;border-radius:0 0 0 0;"></div>
<svg style="left:1340px;top:234px" width="16" height="16" viewBox="0 0 16 16"><path d="M1.800 6 V4.300 A2.900 2.900 0 0 1 7.600 4.300 V8" fill="none" stroke="#2a2a2a" stroke-width="3"/><path d="M1.800 5.700 V4.300 A2.900 2.900 0 0 1 7.600 4.300 V8" fill="none" stroke="#f4f4f4" stroke-width="1.300"/><rect x="5" y="7.500" width="10.500" height="7.500" fill="#ececf0" stroke="#2a2a2a" stroke-width="1.200"/><path d="M6 10h8.500M6 12.500h8.500" stroke="#b4b8c6" stroke-width=".9"/><rect x="9.600" y="9.600" width="1.400" height="2.800" fill="#1a1a1a"/></svg>
<div class="b num" style="left:1215px;top:251px;width:111px;height:21px;border-radius:0 0 10px 10px;"></div>
<svg style="left:1221px;top:258.5px" width="4" height="7" viewBox="0 0 4 7"><path d="M3.5 0 L3.5 7 L0 3.5Z" fill="#6e6e6e"/></svg>
<svg style="left:1316px;top:258.5px" width="4" height="7" viewBox="0 0 4 7"><path d="M0.5 0 L0.5 7 L4 3.5Z" fill="#6e6e6e"/></svg>
<span class="t " style="top:252.5px;letter-spacing:-0.62px;left:1231px;">Z:</span>
<span class="t n" style="top:252.5px;letter-spacing:-0.10px;right:290.5px;text-align:right;">1.000</span>
<div class="b tog" style="left:1334px;top:251px;width:28px;height:21px;border-radius:0 0 4px 4px;"></div>
<svg style="left:1340px;top:254px" width="16" height="16" viewBox="0 0 16 16"><path d="M1.800 6 V4.300 A2.900 2.900 0 0 1 7.600 4.300 V8" fill="none" stroke="#2a2a2a" stroke-width="3"/><path d="M1.800 5.700 V4.300 A2.900 2.900 0 0 1 7.600 4.300 V8" fill="none" stroke="#f4f4f4" stroke-width="1.300"/><rect x="5" y="7.500" width="10.500" height="7.500" fill="#ececf0" stroke="#2a2a2a" stroke-width="1.200"/><path d="M6 10h8.500M6 12.500h8.500" stroke="#b4b8c6" stroke-width=".9"/><rect x="9.600" y="9.600" width="1.400" height="2.800" fill="#1a1a1a"/></svg>
<span class="t ts" style="top:276px;letter-spacing:-0.63px;left:1223px;">Dimensions:</span>
<div class="b num" style="left:1215px;top:294px;width:147px;height:20px;border-radius:10px 10px 0 0;"></div>
<svg style="left:1221px;top:300.5px" width="4" height="7" viewBox="0 0 4 7"><path d="M3.5 0 L3.5 7 L0 3.5Z" fill="#6e6e6e"/></svg>
<svg style="left:1352px;top:300.5px" width="4" height="7" viewBox="0 0 4 7"><path d="M0.5 0 L0.5 7 L4 3.5Z" fill="#6e6e6e"/></svg>
<span class="t " style="top:295.5px;letter-spacing:-0.62px;left:1231px;">X:</span>
<span class="t n" style="top:295.5px;letter-spacing:-0.10px;right:254px;text-align:right;">2.000</span>
<div class="b num" style="left:1215px;top:313px;width:147px;height:21px;border-radius:0 0 0 0;"></div>
<svg style="left:1221px;top:320.5px" width="4" height="7" viewBox="0 0 4 7"><path d="M3.5 0 L3.5 7 L0 3.5Z" fill="#6e6e6e"/></svg>
<svg style="left:1352px;top:320.5px" width="4" height="7" viewBox="0 0 4 7"><path d="M0.5 0 L0.5 7 L4 3.5Z" fill="#6e6e6e"/></svg>
<span class="t " style="top:314.5px;letter-spacing:-0.71px;left:1231px;">Y:</span>
<span class="t n" style="top:314.5px;letter-spacing:-0.10px;right:254px;text-align:right;">6.000</span>
<div class="b num" style="left:1215px;top:333px;width:147px;height:21px;border-radius:0 0 10px 10px;"></div>
<svg style="left:1221px;top:340.5px" width="4" height="7" viewBox="0 0 4 7"><path d="M3.5 0 L3.5 7 L0 3.5Z" fill="#6e6e6e"/></svg>
<svg style="left:1352px;top:340.5px" width="4" height="7" viewBox="0 0 4 7"><path d="M0.5 0 L0.5 7 L4 3.5Z" fill="#6e6e6e"/></svg>
<span class="t " style="top:334.5px;letter-spacing:-0.62px;left:1231px;">Z:</span>
<span class="t n" style="top:334.5px;letter-spacing:-0.10px;right:254px;text-align:right;">2.000</span>
<div class="a" style="left:1212px;top:361px;width:153px;height:1px;background:#404040;"></div>
<div class="a" style="left:1212px;top:362px;width:153px;height:1px;background:#858585;"></div>
<svg style="left:1220px;top:370px" width="9" height="9" viewBox="0 0 9 9"><path d="M0 0 L8.5 0 L4.25 8.5Z" fill="#1a1a1a"/></svg>
<div class="chk" style="left:1232px;top:367px;"></div>
<svg style="left:1232px;top:367px" width="14" height="14" viewBox="0 0 14 14"><path d="M3 7.300 L6.200 11.200 L12.800 1.800" fill="none" stroke="#e0e0e0" stroke-width="1.700"/></svg>
<span class="t pt ts" style="top:364px;letter-spacing:-0.45px;left:1252px;">Grease Pencil</span>
<svg style="left:1349px;top:374px" width="11" height="6" viewBox="0 0 11 6"><rect x="0" y="0" width="1" height="1" fill="#d8d8d8"/><rect x="0" y="1" width="1" height="1" fill="#3a3a3a"/><rect x="0" y="3" width="1" height="1" fill="#d8d8d8"/><rect x="0" y="4" width="1" height="1" fill="#3a3a3a"/><rect x="3" y="0" width="1" height="1" fill="#d8d8d8"/><rect x="3" y="1" width="1" height="1" fill="#3a3a3a"/><rect x="3" y="3" width="1" height="1" fill="#d8d8d8"/><rect x="3" y="4" width="1" height="1" fill="#3a3a3a"/><rect x="6" y="0" width="1" height="1" fill="#d8d8d8"/><rect x="6" y="1" width="1" height="1" fill="#3a3a3a"/><rect x="6" y="3" width="1" height="1" fill="#d8d8d8"/><rect x="6" y="4" width="1" height="1" fill="#3a3a3a"/><rect x="9" y="0" width="1" height="1" fill="#d8d8d8"/><rect x="9" y="1" width="1" height="1" fill="#3a3a3a"/><rect x="9" y="3" width="1" height="1" fill="#d8d8d8"/><rect x="9" y="4" width="1" height="1" fill="#3a3a3a"/></svg>
<div class="b rad" style="left:1215px;top:394px;width:147px;height:20px;"></div>
<div class="a sel" style="left:1216px;top:395px;width:71px;height:18px;border-radius:3px 0 0 3px"></div>
<div class="a" style="left:1287px;top:395px;width:1px;height:18px;background:#262626;"></div>
<span class="t " style="top:395.5px;letter-spacing:-0.71px;left:1101px;width:300px;text-align:center;">Scene</span>
<span class="t w" style="top:395.5px;letter-spacing:-0.47px;left:1174px;width:300px;text-align:center;">Object</span>
<div class="b tool" style="left:1215px;top:419px;width:147px;height:20px;"></div>
<div class="b menu" style="left:1215px;top:419px;width:32px;height:20px;border-radius:4px 0 0 4px;"></div>
<svg style="left:1219px;top:421px" width="16" height="16" viewBox="0 0 16 16"><path d="M1.2 14.800 L2.3 11 L11 2.300 A1.6 1.600 0 0 1 13.600 4.900 L5 13.700Z" fill="#8fb436" stroke="#3e5212" stroke-width=".9"/><path d="M10.300 3 L13 5.600" stroke="#fff" stroke-width="1.1"/><path d="M11.300 1.900 A1.700 1.700 0 0 1 14 4.600 L13.200 5.400 L10.500 2.700Z" fill="#e04040" stroke="#7a1a1a" stroke-width=".6"/><path d="M1.2 14.800 L2.300 11 L5 13.700Z" fill="#e8d6a8" stroke="#3e5212" stroke-width=".5"/><path d="M1.200 14.800l.5-1.700 1.200 1.200z" fill="#222"/></svg>
<svg style="left:1235.5px;top:422px" width="8" height="14" viewBox="0 0 8 14"><path d="M4 .500 L6.800 5.800 L1.200 5.800Z M4 13.400 L6.800 8.200 L1.200 8.200Z" fill="#b4b4b4"/></svg>
<svg style="left:1251px;top:422px" width="14" height="14" viewBox="0 0 14 14"><path d="M7 1.500v11M1.500 7h11" stroke="#1a1a1a" stroke-width="3.800"/><path d="M7 2.500v9M2.500 7h9" stroke="#f4f4f4" stroke-width="1.900"/></svg>
<span class="t " style="top:420.5px;letter-spacing:-0.33px;left:1161px;width:300px;text-align:center;">New</span>
<div class="b tool" style="left:1215px;top:444px;width:147px;height:20px;"></div>
<span class="t " style="top:445.5px;letter-spacing:-0.46px;left:1138px;width:300px;text-align:center;">New Layer</span>
<div class="a" style="left:1212px;top:471px;width:153px;height:1px;background:#404040;"></div>
<div class="a" style="left:1212px;top:472px;width:153px;height:1px;background:#858585;"></div>
<svg style="left:1220px;top:480px" width="9" height="9" viewBox="0 0 9 9"><path d="M0 0 L8.5 0 L4.25 8.5Z" fill="#1a1a1a"/></svg>
<span class="t pt ts" style="top:474px;letter-spacing:-0.44px;left:1232px;">View</span>
<svg style="left:1349px;top:484px" width="11" height="6" viewBox="0 0 11 6"><rect x="0" y="0" width="1" height="1" fill="#d8d8d8"/><rect x="0" y="1" width="1" height="1" fill="#3a3a3a"/><rect x="0" y="3" width="1" height="1" fill="#d8d8d8"/><rect x="0" y="4" width="1" height="1" fill="#3a3a3a"/><rect x="3" y="0" width="1" height="1" fill="#d8d8d8"/><rect x="3" y="1" width="1" height="1" fill="#3a3a3a"/><rect x="3" y="3" width="1" height="1" fill="#d8d8d8"/><rect x="3" y="4" width="1" height="1" fill="#3a3a3a"/><rect x="6" y="0" width="1" height="1" fill="#d8d8d8"/><rect x="6" y="1" width="1" height="1" fill="#3a3a3a"/><rect x="6" y="3" width="1" height="1" fill="#d8d8d8"/><rect x="6" y="4" width="1" height="1" fill="#3a3a3a"/><rect x="9" y="0" width="1" height="1" fill="#d8d8d8"/><rect x="9" y="1" width="1" height="1" fill="#3a3a3a"/><rect x="9" y="3" width="1" height="1" fill="#d8d8d8"/><rect x="9" y="4" width="1" height="1" fill="#3a3a3a"/></svg>
<div class="b num" style="left:1215px;top:504px;width:147px;height:20px;border-radius:10px 10px 10px 10px;"></div>
<svg style="left:1221px;top:510.5px" width="4" height="7" viewBox="0 0 4 7"><path d="M3.5 0 L3.5 7 L0 3.5Z" fill="#6e6e6e"/></svg>
<svg style="left:1352px;top:510.5px" width="4" height="7" viewBox="0 0 4 7"><path d="M0.5 0 L0.5 7 L4 3.5Z" fill="#6e6e6e"/></svg>
<span class="t " style="top:505.5px;letter-spacing:-0.66px;left:1231px;">Lens:</span>
<span class="t n" style="top:505.5px;letter-spacing:-0.08px;right:254px;text-align:right;">35.000</span>
<span class="t ts" style="top:528px;letter-spacing:-0.46px;left:1223px;">Lock to Object:</span>
<div class="b txt" style="left:1215px;top:548px;width:147px;height:20px;"></div>
<svg style="left:1220px;top:550px" width="16" height="16" viewBox="0 0 16 16"><g opacity="1"><path d="M8.300 1.500 L14.300 4.500 L8.300 7.500 L2.300 4.500Z" fill="#f6cf9c"/><path d="M2.300 4.500 L8.300 7.500 L8.300 14.300 L2.300 11Z" fill="#e8963a"/><path d="M8.300 7.500 L14.300 4.500 L14.300 11 L8.300 14.300Z" fill="#c67a22"/><path d="M3.100 10.600 L3.100 5.200 L8.300 7.800 L13.600 5.200 M8.300 7.800 L8.300 13" fill="none" stroke="#fff" stroke-width="1.100" opacity=".92"/><path d="M8.300 1.500 L14.300 4.500 L14.300 11 L8.300 14.300 L2.300 11 L2.300 4.500Z" fill="none" stroke="#3a2206" stroke-width="1.100" stroke-linejoin="round"/></g></svg>
<svg style="left:1345px;top:550px" width="16" height="16" viewBox="0 0 16 16"><path d="M1.500 14.500 L2.300 11.800 L9.200 4.900 L11.100 6.800 L4.200 13.700Z" fill="#e8e8e8" stroke="#1a1a1a" stroke-width="1"/><path d="M8.300 3.600 L12.400 7.700" stroke="#111" stroke-width="2.200" stroke-linecap="round"/><path d="M10.300 5.700 L12.400 3.600" stroke="#111" stroke-width="3.600" stroke-linecap="round"/><circle cx="13" cy="3" r="2.300" fill="#111"/></svg>
<div class="chk" style="left:1218px;top:573px;"></div>
<span class="t ts" style="top:572px;letter-spacing:-0.53px;left:1240px;">Lock to Cursor</span>
<div class="chk" style="left:1218px;top:598px;"></div>
<span class="t ts" style="top:597px;letter-spacing:-0.49px;left:1240px;">Lock Camera to View</span>
<span class="t ts" style="top:622px;letter-spacing:-0.50px;left:1223px;">Clip:</span>
<div class="b num" style="left:1215px;top:640px;width:147px;height:20px;border-radius:10px 10px 0 0;"></div>
<svg style="left:1221px;top:646.5px" width="4" height="7" viewBox="0 0 4 7"><path d="M3.5 0 L3.5 7 L0 3.5Z" fill="#6e6e6e"/></svg>
<svg style="left:1352px;top:646.5px" width="4" height="7" viewBox="0 0 4 7"><path d="M0.5 0 L0.5 7 L4 3.5Z" fill="#6e6e6e"/></svg>
<span class="t " style="top:641.5px;letter-spacing:-0.60px;left:1231px;">Start:</span>
<span class="t n" style="top:641.5px;letter-spacing:-0.10px;right:254px;text-align:right;">0.100</span>
<div class="b num" style="left:1215px;top:659px;width:147px;height:21px;border-radius:0 0 10px 10px;"></div>
<svg style="left:1221px;top:666.5px" width="4" height="7" viewBox="0 0 4 7"><path d="M3.5 0 L3.5 7 L0 3.5Z" fill="#6e6e6e"/></svg>
<svg style="left:1352px;top:666.5px" width="4" height="7" viewBox="0 0 4 7"><path d="M0.5 0 L0.5 7 L4 3.5Z" fill="#6e6e6e"/></svg>
<span class="t " style="top:660.5px;letter-spacing:-0.90px;left:1231px;">End:</span>
<span class="t n" style="top:660.5px;letter-spacing:-0.06px;right:254px;text-align:right;">1000.000</span>
<span class="t " style="top:682px;letter-spacing:-0.54px;left:1223px;color:#3a3a3a;opacity:.75">Local Camera:</span>
<div class="b txt" style="left:1215px;top:700px;width:147px;height:20px;opacity:.55"></div>
<svg style="left:1220px;top:702px" width="16" height="16" viewBox="0 0 16 16"><g opacity="0.6"><path d="M8.300 1.500 L14.300 4.500 L8.300 7.500 L2.300 4.500Z" fill="#f6cf9c"/><path d="M2.300 4.500 L8.300 7.500 L8.300 14.300 L2.300 11Z" fill="#e8963a"/><path d="M8.300 7.500 L14.300 4.500 L14.300 11 L8.300 14.300Z" fill="#c67a22"/><path d="M3.100 10.600 L3.100 5.200 L8.300 7.800 L13.600 5.200 M8.300 7.800 L8.300 13" fill="none" stroke="#fff" stroke-width="1.100" opacity=".92"/><path d="M8.300 1.500 L14.300 4.500 L14.300 11 L8.300 14.300 L2.300 11 L2.300 4.500Z" fill="none" stroke="#3a2206" stroke-width="1.100" stroke-linejoin="round"/></g></svg>
<svg style="left:1344px;top:703px" width="14" height="14" viewBox="0 0 14 14"><g opacity="0.8"><path d="M2 2l10 10M12 2L2 12" stroke="#333" stroke-width="3.600" stroke-linecap="round"/><path d="M2.300 2.300l9.400 9.400M11.700 2.300l-9.400 9.400" stroke="#f4f4f4" stroke-width="1.700" stroke-linecap="round"/></g></svg>
<span class="t " style="top:701.5px;letter-spacing:-0.69px;left:1239px;color:#444">Camera</span>
<div class="chk" style="left:1218px;top:728px;"></div>
<span class="t ts" style="top:727px;letter-spacing:-0.71px;left:1240px;">Render Border</span>
<div class="a" style="left:1212px;top:752px;width:153px;height:1px;background:#404040;"></div>
<div class="a" style="left:1212px;top:753px;width:153px;height:1px;background:#858585;"></div>
<svg style="left:1220px;top:761px" width="9" height="9" viewBox="0 0 9 9"><path d="M0 0 L8.5 0 L4.25 8.5Z" fill="#1a1a1a"/></svg>
<span class="t pt ts" style="top:755px;letter-spacing:-0.57px;left:1232px;">3D Cursor</span>
<svg style="left:1349px;top:765px" width="11" height="6" viewBox="0 0 11 6"><rect x="0" y="0" width="1" height="1" fill="#d8d8d8"/><rect x="0" y="1" width="1" height="1" fill="#3a3a3a"/><rect x="0" y="3" width="1" height="1" fill="#d8d8d8"/><rect x="0" y="4" width="1" height="1" fill="#3a3a3a"/><rect x="3" y="0" width="1" height="1" fill="#d8d8d8"/><rect x="3" y="1" width="1" height="1" fill="#3a3a3a"/><rect x="3" y="3" width="1" height="1" fill="#d8d8d8"/><rect x="3" y="4" width="1" height="1" fill="#3a3a3a"/><rect x="6" y="0" width="1" height="1" fill="#d8d8d8"/><rect x="6" y="1" width="1" height="1" fill="#3a3a3a"/><rect x="6" y="3" width="1" height="1" fill="#d8d8d8"/><rect x="6" y="4" width="1" height="1" fill="#3a3a3a"/><rect x="9" y="0" width="1" height="1" fill="#d8d8d8"/><rect x="9" y="1" width="1" height="1" fill="#3a3a3a"/><rect x="9" y="3" width="1" height="1" fill="#d8d8d8"/><rect x="9" y="4" width="1" height="1" fill="#3a3a3a"/></svg>
<div class="a" style="left:1370px;top:32px;width:13px;height:754px;border-radius:6.5px;background:linear-gradient(90deg,#5a5a5a,#6a6a6a);border:1px solid #555"></div>
<div class="a" style="left:1370px;top:66px;width:13px;height:470px;border-radius:6.5px;background:linear-gradient(90deg,#9a9a9a,#787878);border:1px solid #3c3c3c"></div>
<div class="a" style="left:1207px;top:27px;width:1px;height:762px;background:#888;"></div>
<div class="a" style="left:1389px;top:27px;width:211px;height:26px;background:#696969;"></div>
<div class="a" style="left:1389px;top:27px;width:211px;height:1px;background:#808080;"></div>
<div class="b menu" style="left:1397px;top:30px;width:30px;height:20px;border-radius:5px;"></div>
<svg style="left:1400px;top:32px" width="16" height="16" viewBox="0 0 16 16"><path d="M3.500 3v10.500h4M3.500 8h4" fill="none" stroke="#9ab" stroke-width="1"/><rect x="1" y="1" width="7" height="2.600" fill="#f0a030" stroke="#333" stroke-width=".5"/><rect x="7.500" y="6.600" width="6.500" height="2.600" fill="#f2f2f2" stroke="#333" stroke-width=".5"/><rect x="7.500" y="12" width="6.500" height="2.600" fill="#f2f2f2" stroke="#333" stroke-width=".5"/></svg>
<svg style="left:1415.5px;top:33px" width="8" height="14" viewBox="0 0 8 14"><path d="M4 .500 L6.800 5.800 L1.200 5.800Z M4 13.400 L6.800 8.200 L1.200 8.200Z" fill="#b4b4b4"/></svg>
<span class="t " style="top:31.5px;letter-spacing:-0.34px;left:1439px;">View</span>
<span class="t " style="top:31.5px;letter-spacing:-0.67px;left:1484px;">Search</span>
<div class="b menu" style="left:1531px;top:30px;width:80px;height:20px;border-radius:5px;"></div>
<span class="t w" style="top:31.5px;letter-spacing:-0.54px;left:1539px;">All Scenes</span>
<div class="a" style="left:1389px;top:53px;width:211px;height:122px;background:#727272;"></div>
<div class="a" style="left:1389px;top:53px;width:135px;height:3px;background:#86909c;"></div>
<div class="a" style="left:1389px;top:57px;width:193px;height:20px;background:#777777;"></div>
<div class="a" style="left:1389px;top:97px;width:193px;height:20px;background:#777777;"></div>
<div class="a" style="left:1389px;top:137px;width:193px;height:20px;background:#777777;"></div>
<div class="a" style="left:1524px;top:57px;width:1px;height:100px;background:#686868;"></div>
<div class="a" style="left:1544px;top:57px;width:1px;height:100px;background:#686868;"></div>
<div class="a" style="left:1564px;top:57px;width:1px;height:100px;background:#686868;"></div>
<div class="a" style="left:1415px;top:53px;width:1px;height:94px;background:#444;"></div>
<div class="a" style="left:1420px;top:106px;width:11px;height:1px;background:#444;"></div>
<div class="a" style="left:1420px;top:126px;width:11px;height:1px;background:#444;"></div>
<div class="a" style="left:1420px;top:146px;width:11px;height:1px;background:#444;"></div>
<svg style="left:1417px;top:62px" width="9" height="9" viewBox="0 0 9 9"><circle cx="4.500" cy="4.500" r="3.900" fill="#f2f2f2" stroke="#1a1a1a" stroke-width=".9"/><path d="M4.500 2.200v4.600M2.200 4.500h4.600" stroke="#111" stroke-width="1"/></svg>
<svg style="left:1430px;top:59px" width="16" height="16" viewBox="0 0 16 16"><rect x="5" y="4" width="10" height="10.500" fill="#d8cfa8" stroke="#333" stroke-width=".8" transform="rotate(8 10 9)"/><rect x="1" y="1" width="10.500" height="11" fill="#e8e8ee" stroke="#222" stroke-width=".9"/><rect x="5.500" y="3" width="3" height="5.500" rx="1" fill="#3b6fd0" stroke="#1c3a7a" stroke-width=".5"/><circle cx="4.600" cy="8.500" r="2" fill="#ddd" stroke="#333" stroke-width=".6"/><circle cx="2.800" cy="3" r="1" fill="#e8c83a"/></svg>
<span class="t " style="top:58.5px;letter-spacing:-0.67px;left:1449px;">RenderLayers</span>
<svg style="left:1430px;top:79px" width="16" height="16" viewBox="0 0 16 16"><circle cx="8" cy="8" r="7.200" fill="#a6a6bc"/><circle cx="8" cy="8" r="5.800" fill="#4a78c0" stroke="#1e2a44" stroke-width=".8"/><path d="M4.500 4.800c1.600-1.700 3.400-1 4.300-.2s-.8 1.700-1.700 2.600-1.700 0-2.600.4-.9-2 0-2.800zM9 9c1.300-.9 3.500-.4 3.500.9s-1.300 3-2.600 3S8.100 9.900 9 9zM3.500 9.800c.9 0 1.700.9 1.700 2.200C4.300 11.500 3.500 10.700 3.500 9.800z" fill="#4c8038"/><path d="M4 5.500a5 5 0 0 1 5-2.800" fill="none" stroke="#cfe0ff" stroke-width=".8" opacity=".7"/></svg>
<span class="t " style="top:78.5px;letter-spacing:-0.63px;left:1449px;">World</span>
<svg style="left:1412px;top:102px" width="9" height="9" viewBox="0 0 9 9"><circle cx="4.500" cy="4.500" r="3.900" fill="#f2f2f2" stroke="#1a1a1a" stroke-width=".9"/><path d="M4.500 2.200v4.600M2.200 4.500h4.600" stroke="#111" stroke-width="1"/></svg>
<svg style="left:1430px;top:99px" width="16" height="16" viewBox="0 0 16 16"><g opacity="1"><circle cx="4.700" cy="4.700" r="3.300" fill="#f09a30" stroke="#5a3006" stroke-width="1"/><circle cx="11" cy="4.700" r="3.300" fill="#f09a30" stroke="#5a3006" stroke-width="1"/><circle cx="4.700" cy="4.700" r="1.500" fill="#f8c880" stroke="#5a3006" stroke-width=".8"/><circle cx="11" cy="4.700" r="1.500" fill="#f8c880" stroke="#5a3006" stroke-width=".8"/><rect x="4" y="9" width="7.500" height="5" fill="#f09a30" stroke="#5a3006" stroke-width="1"/><path d="M11.500 10.300l3.800-1v4.400l-3.800-1z" fill="#f09a30" stroke="#5a3006" stroke-width=".9"/><rect x="2.500" y="10.500" width="1.800" height="2" fill="#f09a30" stroke="#5a3006" stroke-width=".7"/></g></svg>
<span class="t " style="top:98.5px;letter-spacing:-0.69px;left:1449px;">Camera</span>
<div class="a" style="left:1498px;top:100px;width:1px;height:14px;background:#3a3a3a;"></div>
<svg style="left:1526px;top:99px" width="16" height="16" viewBox="0 0 16 16"><path d="M1 8.200C3.500 3.800 12.500 3.800 15 8.200 12.500 12.400 3.500 12.400 1 8.200z" fill="#fafafa" stroke="#222" stroke-width=".9"/><circle cx="8" cy="7.600" r="2.600" fill="#8a8a8a"/><circle cx="8.300" cy="7.100" r="1.200" fill="#111"/></svg>
<svg style="left:1547px;top:99px" width="16" height="16" viewBox="0 0 16 16"><path d="M4.500 1v11.500l2.700-2.400 2.100 4.700 1.900-.9-2.100-4.500h3.700z" fill="#fff" stroke="#111" stroke-width="1.100" stroke-linejoin="round"/></svg>
<svg style="left:1566px;top:99px" width="16" height="16" viewBox="0 0 16 16"><rect x="3" y="1.800" width="3.400" height="3" rx=".8" fill="#f4f4f4" stroke="#111" stroke-width="1.100"/><rect x="1.500" y="3.800" width="13" height="9.700" rx="1.200" fill="#e2e2e2" stroke="#111" stroke-width="1.300"/><rect x="2.300" y="7" width="4.500" height="5.700" fill="#3a3a3a"/><rect x="2.300" y="4.600" width="11.500" height="2.200" fill="#f2f2f2"/><rect x="11.600" y="5.200" width="2" height="1" fill="#223"/><circle cx="10" cy="9.400" r="3.100" fill="#e8e8e8" stroke="#333" stroke-width=".8"/><circle cx="10" cy="9.400" r="2.200" fill="#2a1a1a"/><path d="M8.100 9.400a1.900 1.900 0 0 1 3.800 0z" fill="#27447e" transform="rotate(-50 10 9.400)"/><path d="M8.100 9.400a1.900 1.900 0 0 0 3.800 0z" fill="#7c2618" transform="rotate(-50 10 9.400)"/><circle cx="4.600" cy="5.700" r=".9" fill="#f01010"/></svg>
<svg style="left:1412px;top:122px" width="9" height="9" viewBox="0 0 9 9"><circle cx="4.500" cy="4.500" r="3.900" fill="#f2f2f2" stroke="#1a1a1a" stroke-width=".9"/><path d="M4.500 2.200v4.600M2.200 4.500h4.600" stroke="#111" stroke-width="1"/></svg>
<svg style="left:1430px;top:119px" width="16" height="16" viewBox="0 0 16 16"><path d="M2.800 3.200h10.400L8 13.600z" fill="none" stroke="#6a3a08" stroke-width="2.700" stroke-linejoin="round"/><path d="M2.800 3.200h10.400L8 13.600z" fill="none" stroke="#f09a30" stroke-width="1.300"/><circle cx="2.800" cy="3.200" r="1.100" fill="#fff"/><circle cx="13.200" cy="3.200" r="1.100" fill="#fff"/><circle cx="8" cy="13.600" r="1.100" fill="#fff"/></svg>
<span class="t w" style="top:118.5px;letter-spacing:-0.49px;left:1449px;">Cube.002</span>
<div class="a" style="left:1508px;top:120px;width:1px;height:14px;background:#3a3a3a;"></div>
<svg style="left:1526px;top:119px" width="16" height="16" viewBox="0 0 16 16"><path d="M1 8.200C3.500 3.800 12.500 3.800 15 8.200 12.500 12.400 3.500 12.400 1 8.200z" fill="#fafafa" stroke="#222" stroke-width=".9"/><circle cx="8" cy="7.600" r="2.600" fill="#8a8a8a"/><circle cx="8.300" cy="7.100" r="1.200" fill="#111"/></svg>
<svg style="left:1547px;top:119px" width="16" height="16" viewBox="0 0 16 16"><path d="M4.500 1v11.500l2.700-2.400 2.100 4.700 1.900-.9-2.100-4.500h3.700z" fill="#fff" stroke="#111" stroke-width="1.100" stroke-linejoin="round"/></svg>
<svg style="left:1566px;top:119px" width="16" height="16" viewBox="0 0 16 16"><rect x="3" y="1.800" width="3.400" height="3" rx=".8" fill="#f4f4f4" stroke="#111" stroke-width="1.100"/><rect x="1.500" y="3.800" width="13" height="9.700" rx="1.200" fill="#e2e2e2" stroke="#111" stroke-width="1.300"/><rect x="2.300" y="7" width="4.500" height="5.700" fill="#3a3a3a"/><rect x="2.300" y="4.600" width="11.500" height="2.200" fill="#f2f2f2"/><rect x="11.600" y="5.200" width="2" height="1" fill="#223"/><circle cx="10" cy="9.400" r="3.100" fill="#e8e8e8" stroke="#333" stroke-width=".8"/><circle cx="10" cy="9.400" r="2.200" fill="#2a1a1a"/><path d="M8.100 9.400a1.900 1.900 0 0 1 3.800 0z" fill="#27447e" transform="rotate(-50 10 9.400)"/><path d="M8.100 9.400a1.900 1.900 0 0 0 3.800 0z" fill="#7c2618" transform="rotate(-50 10 9.400)"/><circle cx="4.600" cy="5.700" r=".9" fill="#f01010"/></svg>
<svg style="left:1412px;top:142px" width="9" height="9" viewBox="0 0 9 9"><circle cx="4.500" cy="4.500" r="3.900" fill="#f2f2f2" stroke="#1a1a1a" stroke-width=".9"/><path d="M4.500 2.200v4.600M2.200 4.500h4.600" stroke="#111" stroke-width="1"/></svg>
<svg style="left:1430px;top:139px" width="16" height="16" viewBox="0 0 16 16"><path d="M8 .800a4.600 4.600 0 0 1 3.200 8c-.8.900-1 1.500-1 2.700H5.800c0-1.200-.2-1.800-1-2.700A4.600 4.600 0 0 1 8 .800z" fill="#f6b862" stroke="#6a3a08" stroke-width=".9"/><path d="M6.500 5l1.500 2 1.500-2M8 7v4" fill="none" stroke="#8a4a10" stroke-width=".8"/><rect x="5.800" y="11.500" width="4.400" height="3" fill="#f2e2c0" stroke="#6a3a08" stroke-width=".8"/><path d="M5.800 13h4.400" stroke="#6a3a08" stroke-width=".6"/><path d="M7 15.300h2" stroke="#333" stroke-width="1.200"/></svg>
<span class="t " style="top:138.5px;letter-spacing:-0.64px;left:1449px;">Lamp</span>
<div class="a" style="left:1487px;top:140px;width:1px;height:14px;background:#3a3a3a;"></div>
<svg style="left:1526px;top:139px" width="16" height="16" viewBox="0 0 16 16"><path d="M1 8.200C3.500 3.800 12.500 3.800 15 8.200 12.500 12.400 3.500 12.400 1 8.200z" fill="#fafafa" stroke="#222" stroke-width=".9"/><circle cx="8" cy="7.600" r="2.600" fill="#8a8a8a"/><circle cx="8.300" cy="7.100" r="1.200" fill="#111"/></svg>
<svg style="left:1547px;top:139px" width="16" height="16" viewBox="0 0 16 16"><path d="M4.500 1v11.500l2.700-2.400 2.100 4.700 1.900-.9-2.100-4.500h3.700z" fill="#fff" stroke="#111" stroke-width="1.100" stroke-linejoin="round"/></svg>
<svg style="left:1566px;top:139px" width="16" height="16" viewBox="0 0 16 16"><rect x="3" y="1.800" width="3.400" height="3" rx=".8" fill="#f4f4f4" stroke="#111" stroke-width="1.100"/><rect x="1.500" y="3.800" width="13" height="9.700" rx="1.200" fill="#e2e2e2" stroke="#111" stroke-width="1.300"/><rect x="2.300" y="7" width="4.500" height="5.700" fill="#3a3a3a"/><rect x="2.300" y="4.600" width="11.500" height="2.200" fill="#f2f2f2"/><rect x="11.600" y="5.200" width="2" height="1" fill="#223"/><circle cx="10" cy="9.400" r="3.100" fill="#e8e8e8" stroke="#333" stroke-width=".8"/><circle cx="10" cy="9.400" r="2.200" fill="#2a1a1a"/><path d="M8.100 9.400a1.900 1.900 0 0 1 3.800 0z" fill="#27447e" transform="rotate(-50 10 9.400)"/><path d="M8.100 9.400a1.900 1.900 0 0 0 3.800 0z" fill="#7c2618" transform="rotate(-50 10 9.400)"/><circle cx="4.600" cy="5.700" r=".9" fill="#f01010"/></svg>
<div class="a" style="left:1506px;top:97px;width:18px;height:19px;overflow:hidden"><svg style="left:1px;top:0" width="19" height="19"><circle cx="9.500" cy="9.500" r="9" fill="#9a9a9a"/></svg></div>
<svg style="left:1508px;top:99px" width="16" height="16" viewBox="0 0 16 16"><g opacity="0.8"><circle cx="4.700" cy="4.700" r="3.300" fill="#c4c4c4" stroke="#6e6e6e" stroke-width="1"/><circle cx="11" cy="4.700" r="3.300" fill="#c4c4c4" stroke="#6e6e6e" stroke-width="1"/><circle cx="4.700" cy="4.700" r="1.500" fill="#dcdcdc" stroke="#6e6e6e" stroke-width=".8"/><circle cx="11" cy="4.700" r="1.500" fill="#dcdcdc" stroke="#6e6e6e" stroke-width=".8"/><rect x="4" y="9" width="7.500" height="5" fill="#c4c4c4" stroke="#6e6e6e" stroke-width="1"/><path d="M11.500 10.300l3.800-1v4.400l-3.800-1z" fill="#c4c4c4" stroke="#6e6e6e" stroke-width=".9"/><rect x="2.500" y="10.500" width="1.800" height="2" fill="#c4c4c4" stroke="#6e6e6e" stroke-width=".7"/></g></svg>
<div class="a" style="left:1519px;top:119px;width:5px;height:16px;overflow:hidden"><svg width="16" height="16" style="left:0;top:0"><path d="M2.500 3h11L8 13.500z" fill="none" stroke="#ddd" stroke-width="1.100"/><circle cx="2.500" cy="3" r="1.500" fill="#fff" stroke="#333" stroke-width=".6"/></svg></div>
<svg style="left:1498px;top:139px" width="16" height="16" viewBox="0 0 16 16"><g opacity=".8"><circle cx="8" cy="8" r="2.700" fill="#e4e4e4" stroke="#a0a070" stroke-width="1"/><path d="M1 4.500V1h3.500M11.500 1H15v3.500M15 11.500V15h-3.500M4.500 15H1v-3.500M1.500 1.500l2.500 2.500M14.500 1.500l-2.500 2.500M14.500 14.500l-2.500-2.500M1.500 14.500l2.500-2.500" fill="none" stroke="#b0b088" stroke-width="1.300"/></g></svg>
<div class="a" style="left:1392px;top:159px;width:186px;height:13px;border-radius:6.500px;background:linear-gradient(#5a5a5a,#686868);border:1px solid #575757"></div>
<div class="a" style="left:1392px;top:159px;width:120px;height:13px;border-radius:6.500px;background:linear-gradient(#929292,#7a7a7a);border:1px solid #444"></div>
<div class="a" style="left:1583px;top:58px;width:13px;height:96px;border-radius:6.500px;background:linear-gradient(90deg,#5a5a5a,#686868);border:1px solid #575757"></div>
<div class="a" style="left:1583px;top:71px;width:13px;height:83px;border-radius:6.500px;background:linear-gradient(90deg,#9a9a9a,#787878);border:1px solid #444"></div>
<div class="a" style="left:1389px;top:177px;width:211px;height:26px;background:#696969;"></div>
<div class="a" style="left:1389px;top:177px;width:211px;height:1px;background:#808080;"></div>
<div class="a" style="left:1389px;top:203px;width:211px;height:1px;background:#7b7b7b;"></div>
<div class="b menu" style="left:1397px;top:180px;width:30px;height:20px;border-radius:5px;"></div>
<svg style="left:1400px;top:182px" width="16" height="16" viewBox="0 0 16 16"><rect x="1.500" y="1.500" width="13" height="5" rx="2.400" fill="#4e4e4e" stroke="#1a1a1a" stroke-width="1"/><rect x="9" y="2" width="5" height="4" rx="1.800" fill="#e8e8e8"/><rect x="1.500" y="9" width="13" height="5.500" rx="2.400" fill="#f6f6f6" stroke="#1a1a1a" stroke-width="1"/><rect x="5" y="10" width="6" height="3.500" fill="#c4c4c4"/><path d="M2.600 11.750l2.400-1.700v3.400zM13.400 11.750l-2.400-1.700v3.400z" fill="#111"/></svg>
<svg style="left:1415.5px;top:183px" width="8" height="14" viewBox="0 0 8 14"><path d="M4 .500 L6.800 5.800 L1.200 5.800Z M4 13.400 L6.800 8.200 L1.200 8.200Z" fill="#b4b4b4"/></svg>
<div class="b rad" style="left:1435px;top:180px;width:175px;height:20px;border-radius:4px 0 0 4px;"></div>
<div class="a sel" style="left:1436px;top:181px;width:19px;height:18px;border-radius:3px 0 0 3px"></div>
<div class="a" style="left:1455px;top:181px;width:1px;height:18px;background:#262626;"></div>
<div class="a" style="left:1475px;top:181px;width:1px;height:18px;background:#262626;"></div>
<div class="a" style="left:1495px;top:181px;width:1px;height:18px;background:#262626;"></div>
<div class="a" style="left:1515px;top:181px;width:1px;height:18px;background:#262626;"></div>
<div class="a" style="left:1535px;top:181px;width:1px;height:18px;background:#262626;"></div>
<div class="a" style="left:1555px;top:181px;width:1px;height:18px;background:#262626;"></div>
<div class="a" style="left:1575px;top:181px;width:1px;height:18px;background:#262626;"></div>
<div class="a" style="left:1595px;top:181px;width:1px;height:18px;background:#262626;"></div>
<svg style="left:1437px;top:182px" width="16" height="16" viewBox="0 0 16 16"><rect x="3" y="1.800" width="3.400" height="3" rx=".8" fill="#f4f4f4" stroke="#111" stroke-width="1.100"/><rect x="1.500" y="3.800" width="13" height="9.700" rx="1.200" fill="#e2e2e2" stroke="#111" stroke-width="1.300"/><rect x="2.300" y="7" width="4.500" height="5.700" fill="#3a3a3a"/><rect x="2.300" y="4.600" width="11.500" height="2.200" fill="#f2f2f2"/><rect x="11.600" y="5.200" width="2" height="1" fill="#223"/><circle cx="10" cy="9.400" r="3.100" fill="#e8e8e8" stroke="#333" stroke-width=".8"/><circle cx="10" cy="9.400" r="2.200" fill="#2a1a1a"/><path d="M8.100 9.400a1.900 1.900 0 0 1 3.800 0z" fill="#27447e" transform="rotate(-50 10 9.400)"/><path d="M8.100 9.400a1.900 1.900 0 0 0 3.800 0z" fill="#7c2618" transform="rotate(-50 10 9.400)"/><circle cx="4.600" cy="5.700" r=".9" fill="#f01010"/></svg>
<div class="a" style="left:0;top:0;opacity:.8">
<svg style="left:1457px;top:182px" width="16" height="16" viewBox="0 0 16 16"><rect x="5" y="4" width="10" height="10.500" fill="#d8cfa8" stroke="#333" stroke-width=".8" transform="rotate(8 10 9)"/><rect x="1" y="1" width="10.500" height="11" fill="#e8e8ee" stroke="#222" stroke-width=".9"/><rect x="5.500" y="3" width="3" height="5.500" rx="1" fill="#3b6fd0" stroke="#1c3a7a" stroke-width=".5"/><circle cx="4.600" cy="8.500" r="2" fill="#ddd" stroke="#333" stroke-width=".6"/><circle cx="2.800" cy="3" r="1" fill="#e8c83a"/></svg>
<svg style="left:1477px;top:182px" width="16" height="16" viewBox="0 0 16 16"><defs><radialGradient id="scs" cx=".35" cy=".3" r=".8"><stop offset="0" stop-color="#fff"/><stop offset=".6" stop-color="#d8d8d8"/><stop offset="1" stop-color="#777"/></radialGradient><linearGradient id="scc" x1="0" y1="0" x2="1" y2="0"><stop offset="0" stop-color="#c4dafa"/><stop offset=".45" stop-color="#6a98e4"/><stop offset="1" stop-color="#2c55a8"/></linearGradient></defs><circle cx="3.800" cy="3" r="2.300" fill="#c8c040" opacity=".7"/><circle cx="3.800" cy="3" r="1.100" fill="#fffbe0"/><path d="M7.600 2.700 a3.400 1.500 0 0 1 6.800 0 v8.300 a3.400 1.500 0 0 1 -6.800 0z" fill="url(#scc)" stroke="#1c3a7a" stroke-width=".9"/><ellipse cx="11" cy="2.800" rx="2.700" ry="1" fill="#cfe0fa"/><circle cx="6.600" cy="11.200" r="3.600" fill="url(#scs)" stroke="#222" stroke-width=".9"/></svg>
<svg style="left:1497px;top:182px" width="16" height="16" viewBox="0 0 16 16"><circle cx="8" cy="8" r="7.200" fill="#a6a6bc"/><circle cx="8" cy="8" r="5.800" fill="#4a78c0" stroke="#1e2a44" stroke-width=".8"/><path d="M4.500 4.800c1.600-1.700 3.400-1 4.300-.2s-.8 1.700-1.700 2.600-1.700 0-2.600.4-.9-2 0-2.800zM9 9c1.300-.9 3.500-.4 3.500.9s-1.300 3-2.600 3S8.100 9.900 9 9zM3.500 9.800c.9 0 1.700.9 1.700 2.200C4.300 11.500 3.500 10.700 3.500 9.800z" fill="#4c8038"/><path d="M4 5.500a5 5 0 0 1 5-2.800" fill="none" stroke="#cfe0ff" stroke-width=".8" opacity=".7"/></svg>
<svg style="left:1517px;top:182px" width="16" height="16" viewBox="0 0 16 16"><g opacity="1"><path d="M8.300 1.500 L14.300 4.500 L8.300 7.500 L2.300 4.500Z" fill="#f6cf9c"/><path d="M2.300 4.500 L8.300 7.500 L8.300 14.300 L2.300 11Z" fill="#e8963a"/><path d="M8.300 7.500 L14.300 4.500 L14.300 11 L8.300 14.300Z" fill="#c67a22"/><path d="M3.100 10.600 L3.100 5.200 L8.300 7.800 L13.600 5.200 M8.300 7.800 L8.300 13" fill="none" stroke="#fff" stroke-width="1.100" opacity=".92"/><path d="M8.300 1.500 L14.300 4.500 L14.300 11 L8.300 14.300 L2.300 11 L2.300 4.500Z" fill="none" stroke="#3a2206" stroke-width="1.100" stroke-linejoin="round"/></g></svg>
<svg style="left:1537px;top:182px" width="16" height="16" viewBox="0 0 16 16"><g fill="none" stroke="#333" stroke-width="3.200"><ellipse cx="5.300" cy="10.300" rx="3.300" ry="2.300" transform="rotate(-40 5.300 10.300)"/><ellipse cx="10.700" cy="5.700" rx="3.300" ry="2.300" transform="rotate(-40 10.700 5.700)"/></g><g fill="none" stroke="#c8c8c8" stroke-width="1.700"><ellipse cx="5.300" cy="10.300" rx="3.300" ry="2.300" transform="rotate(-40 5.300 10.300)"/><ellipse cx="10.700" cy="5.700" rx="3.300" ry="2.300" transform="rotate(-40 10.700 5.700)"/></g></svg>
<svg style="left:1557px;top:182px" width="16" height="16" viewBox="0 0 16 16"><path d="M2 14.500 L9 7.200" stroke="#1c3a7a" stroke-width="3.800" stroke-linecap="round"/><path d="M2 14.500 L9 7.200" stroke="#6f9ae0" stroke-width="2.200" stroke-linecap="round"/><path d="M8 5.500 A3.600 3.600 0 0 1 13 1.500 L11 3.800 L12.500 5.300 L14.800 3.300 A3.600 3.600 0 0 1 10.500 8.200Z" fill="#6f9ae0" stroke="#1c3a7a" stroke-width=".9"/></svg>
<svg style="left:1577px;top:182px" width="16" height="16" viewBox="0 0 16 16"><path d="M2.500 3h11L8 13.500z" fill="none" stroke="#333" stroke-width="2.600"/><path d="M2.500 3h11L8 13.500z" fill="none" stroke="#e8e8e8" stroke-width="1.100"/><circle cx="2.500" cy="3" r="1.500" fill="#fff" stroke="#333" stroke-width=".6"/><circle cx="13.500" cy="3" r="1.500" fill="#fff" stroke="#333" stroke-width=".6"/><circle cx="8" cy="13.500" r="1.500" fill="#fff" stroke="#333" stroke-width=".6"/></svg>
</div>
<svg style="left:1596px;top:182px" width="4" height="16"><circle cx="8" cy="8" r="7" fill="#bbb" stroke="#333"/></svg>
<svg style="left:1398px;top:214px" width="16" height="16" viewBox="0 0 16 16"><path d="M1 15.200 L5.800 10.400" stroke="#222" stroke-width="2.800" stroke-linecap="round"/><path d="M1.200 15 L6 10.200" stroke="#e4e4e4" stroke-width="1.300" stroke-linecap="round"/><path d="M2.800 7.600 Q5 6.500 7 6.800 L9.800 3.200 L9 2 L10.500 .800 L15.200 5.500 L14 7 L12.800 6.200 L9.200 9 Q9.500 11 8.400 13.200Z" fill="#ececec" stroke="#222" stroke-width="1" stroke-linejoin="round"/><path d="M8 7.500 L11 4.500" stroke="#999" stroke-width="1"/></svg>
<svg style="left:1420px;top:213px" width="16" height="16" viewBox="0 0 16 16"><defs><radialGradient id="scs" cx=".35" cy=".3" r=".8"><stop offset="0" stop-color="#fff"/><stop offset=".6" stop-color="#d8d8d8"/><stop offset="1" stop-color="#777"/></radialGradient><linearGradient id="scc" x1="0" y1="0" x2="1" y2="0"><stop offset="0" stop-color="#c4dafa"/><stop offset=".45" stop-color="#6a98e4"/><stop offset="1" stop-color="#2c55a8"/></linearGradient></defs><circle cx="3.800" cy="3" r="2.300" fill="#c8c040" opacity=".7"/><circle cx="3.800" cy="3" r="1.100" fill="#fffbe0"/><path d="M7.600 2.700 a3.400 1.500 0 0 1 6.800 0 v8.300 a3.400 1.500 0 0 1 -6.800 0z" fill="url(#scc)" stroke="#1c3a7a" stroke-width=".9"/><ellipse cx="11" cy="2.800" rx="2.700" ry="1" fill="#cfe0fa"/><circle cx="6.600" cy="11.200" r="3.600" fill="url(#scs)" stroke="#222" stroke-width=".9"/></svg>
<span class="t " style="top:213px;letter-spacing:-0.71px;left:1440.5px;">Scene</span>
<div class="a" style="left:1393px;top:238px;width:185px;height:1px;background:#404040;"></div>
<div class="a" style="left:1393px;top:239px;width:185px;height:1px;background:#858585;"></div>
<svg style="left:1401px;top:247px" width="9" height="9" viewBox="0 0 9 9"><path d="M0 0 L8.5 0 L4.25 8.5Z" fill="#1a1a1a"/></svg>
<span class="t pt ts" style="top:241px;letter-spacing:-0.54px;left:1413px;">Render</span>
<svg style="left:1562px;top:251px" width="11" height="6" viewBox="0 0 11 6"><rect x="0" y="0" width="1" height="1" fill="#d8d8d8"/><rect x="0" y="1" width="1" height="1" fill="#3a3a3a"/><rect x="0" y="3" width="1" height="1" fill="#d8d8d8"/><rect x="0" y="4" width="1" height="1" fill="#3a3a3a"/><rect x="3" y="0" width="1" height="1" fill="#d8d8d8"/><rect x="3" y="1" width="1" height="1" fill="#3a3a3a"/><rect x="3" y="3" width="1" height="1" fill="#d8d8d8"/><rect x="3" y="4" width="1" height="1" fill="#3a3a3a"/><rect x="6" y="0" width="1" height="1" fill="#d8d8d8"/><rect x="6" y="1" width="1" height="1" fill="#3a3a3a"/><rect x="6" y="3" width="1" height="1" fill="#d8d8d8"/><rect x="6" y="4" width="1" height="1" fill="#3a3a3a"/><rect x="9" y="0" width="1" height="1" fill="#d8d8d8"/><rect x="9" y="1" width="1" height="1" fill="#3a3a3a"/><rect x="9" y="3" width="1" height="1" fill="#d8d8d8"/><rect x="9" y="4" width="1" height="1" fill="#3a3a3a"/></svg>
<div class="b tool" style="left:1396px;top:271px;width:179px;height:20px;"></div>
<div class="a" style="left:1454px;top:272px;width:1px;height:18px;background:#262626;"></div>
<div class="a" style="left:1513px;top:272px;width:1px;height:18px;background:#262626;"></div>
<svg style="left:1398px;top:273px" width="16" height="16" viewBox="0 0 16 16"><rect x="3" y="1.800" width="3.400" height="3" rx=".8" fill="#f4f4f4" stroke="#111" stroke-width="1.100"/><rect x="1.500" y="3.800" width="13" height="9.700" rx="1.200" fill="#e2e2e2" stroke="#111" stroke-width="1.300"/><rect x="2.300" y="7" width="4.500" height="5.700" fill="#3a3a3a"/><rect x="2.300" y="4.600" width="11.500" height="2.200" fill="#f2f2f2"/><rect x="11.600" y="5.200" width="2" height="1" fill="#223"/><circle cx="10" cy="9.400" r="3.100" fill="#e8e8e8" stroke="#333" stroke-width=".8"/><circle cx="10" cy="9.400" r="2.200" fill="#2a1a1a"/><path d="M8.100 9.400a1.900 1.900 0 0 1 3.800 0z" fill="#27447e" transform="rotate(-50 10 9.400)"/><path d="M8.100 9.400a1.900 1.900 0 0 0 3.800 0z" fill="#7c2618" transform="rotate(-50 10 9.400)"/><circle cx="4.600" cy="5.700" r=".9" fill="#f01010"/><circle cx="13.300" cy="2.700" r="2.800" fill="#f0d848" opacity=".85"/><path d="M13.300 .4v4.600M11 2.700h4.600" stroke="#fffde0" stroke-width="1.300"/></svg>
<span class="t " style="top:272.5px;letter-spacing:-0.78px;left:1415px;">Render</span>
<svg style="left:1457px;top:273px" width="16" height="16" viewBox="0 0 16 16"><rect x="2" y="7" width="12.500" height="8" fill="#2a2a2a" stroke="#111" stroke-width=".8"/><path d="M2 7 L1.300 4.200 L13.500 1 L14.200 3.800Z" fill="#f0f0f0" stroke="#111" stroke-width=".8"/><path d="M3.500 3.700l1.300 2.600M6.500 2.900l1.300 2.600M9.500 2.100l1.300 2.600" stroke="#111" stroke-width="1.500"/><path d="M3.500 9.500h9.500M3.500 12h9.500" stroke="#888" stroke-width=".9"/><rect x="0" y="5" width="3" height="6" fill="#5a8ad8" opacity=".8"/></svg>
<span class="t " style="top:272.5px;letter-spacing:-0.48px;left:1473px;width:40px;overflow:hidden;">Animati</span>
<svg style="left:1516px;top:273px" width="16" height="16" viewBox="0 0 16 16"><path d="M1.500 5.500h3l3.500-3.500v12l-3.500-3.500h-3z" fill="#e8e8e8" stroke="#222" stroke-width="1"/><path d="M10 5a4 4 0 0 1 0 6M12 3a6.500 6.500 0 0 1 0 10" fill="none" stroke="#5a8ad8" stroke-width="1.300"/></svg>
<span class="t " style="top:272.5px;letter-spacing:-0.65px;left:1537px;">Audio</span>
<span class="t ts" style="top:298px;letter-spacing:-0.53px;left:1403px;">Display:</span>
<div class="b tool" style="left:1460px;top:296px;width:115px;height:20px;"></div>
<div class="b menu" style="left:1460px;top:296px;width:95px;height:20px;border-radius:4px 0 0 4px;"></div>
<span class="t w" style="top:297.5px;letter-spacing:-0.63px;left:1468px;">Image Editor</span>
<svg style="left:1543.5px;top:299px" width="8" height="14" viewBox="0 0 8 14"><path d="M4 .500 L6.800 5.800 L1.200 5.800Z M4 13.400 L6.800 8.200 L1.200 8.200Z" fill="#b4b4b4"/></svg>
<svg style="left:1556px;top:298px" width="16" height="16" viewBox="0 0 16 16"><path d="M1.800 6 V4.300 A2.900 2.900 0 0 1 7.600 4.300 V8" fill="none" stroke="#2a2a2a" stroke-width="3"/><path d="M1.800 5.700 V4.300 A2.900 2.900 0 0 1 7.600 4.300 V8" fill="none" stroke="#f4f4f4" stroke-width="1.300"/><rect x="5" y="7.500" width="10.500" height="7.500" fill="#ececf0" stroke="#2a2a2a" stroke-width="1.200"/><path d="M6 10h8.500M6 12.500h8.500" stroke="#b4b8c6" stroke-width=".9"/><rect x="9.600" y="9.600" width="1.400" height="2.800" fill="#1a1a1a"/></svg>
<div class="a" style="left:1393px;top:323px;width:185px;height:1px;background:#404040;"></div>
<div class="a" style="left:1393px;top:324px;width:185px;height:1px;background:#858585;"></div>
<svg style="left:1401px;top:332px" width="9" height="9" viewBox="0 0 9 9"><path d="M0 0 L8.5 0 L4.25 8.5Z" fill="#1a1a1a"/></svg>
<span class="t pt ts" style="top:326px;letter-spacing:-0.40px;left:1413px;">Dimensions</span>
<svg style="left:1562px;top:336px" width="11" height="6" viewBox="0 0 11 6"><rect x="0" y="0" width="1" height="1" fill="#d8d8d8"/><rect x="0" y="1" width="1" height="1" fill="#3a3a3a"/><rect x="0" y="3" width="1" height="1" fill="#d8d8d8"/><rect x="0" y="4" width="1" height="1" fill="#3a3a3a"/><rect x="3" y="0" width="1" height="1" fill="#d8d8d8"/><rect x="3" y="1" width="1" height="1" fill="#3a3a3a"/><rect x="3" y="3" width="1" height="1" fill="#d8d8d8"/><rect x="3" y="4" width="1" height="1" fill="#3a3a3a"/><rect x="6" y="0" width="1" height="1" fill="#d8d8d8"/><rect x="6" y="1" width="1" height="1" fill="#3a3a3a"/><rect x="6" y="3" width="1" height="1" fill="#d8d8d8"/><rect x="6" y="4" width="1" height="1" fill="#3a3a3a"/><rect x="9" y="0" width="1" height="1" fill="#d8d8d8"/><rect x="9" y="1" width="1" height="1" fill="#3a3a3a"/><rect x="9" y="3" width="1" height="1" fill="#d8d8d8"/><rect x="9" y="4" width="1" height="1" fill="#3a3a3a"/></svg>
<div class="b tool" style="left:1396px;top:356px;width:179px;height:20px;"></div>
<div class="b menu" style="left:1396px;top:356px;width:139px;height:20px;border-radius:4px 0 0 4px;"></div>
<span class="t w" style="top:357.5px;letter-spacing:-0.69px;left:1403px;">Render Presets</span>
<svg style="left:1523.5px;top:359px" width="8" height="14" viewBox="0 0 8 14"><path d="M4 .500 L6.800 5.800 L1.200 5.800Z M4 13.400 L6.800 8.200 L1.200 8.200Z" fill="#b4b4b4"/></svg>
<div class="a" style="left:1554px;top:357px;width:1px;height:18px;background:#262626;"></div>
<svg style="left:1537px;top:359px" width="14" height="14" viewBox="0 0 14 14"><path d="M7 1.500v11M1.500 7h11" stroke="#1a1a1a" stroke-width="3.800"/><path d="M7 2.500v9M2.500 7h9" stroke="#f4f4f4" stroke-width="1.900"/></svg>
<svg style="left:1558px;top:359px" width="14" height="14" viewBox="0 0 14 14"><path d="M1.500 7h11" stroke="#1a1a1a" stroke-width="3.800"/><path d="M2.500 7h9" stroke="#f4f4f4" stroke-width="1.900"/></svg>
<span class="t ts" style="top:383px;letter-spacing:-0.61px;left:1403px;">Resolution:</span>
<span class="t ts" style="top:383px;letter-spacing:-0.70px;left:1497px;">Frame Range:</span>
<div class="b num" style="left:1396px;top:402px;width:85px;height:20px;border-radius:10px 10px 0 0;"></div>
<svg style="left:1402px;top:408.5px" width="4" height="7" viewBox="0 0 4 7"><path d="M3.5 0 L3.5 7 L0 3.5Z" fill="#6e6e6e"/></svg>
<svg style="left:1471px;top:408.5px" width="4" height="7" viewBox="0 0 4 7"><path d="M0.5 0 L0.5 7 L4 3.5Z" fill="#6e6e6e"/></svg>
<span class="t n" style="top:402.5px;letter-spacing:-0.36px;left:1288.5px;width:300px;text-align:center;">X:1920 px</span>
<div class="b num" style="left:1396px;top:421px;width:85px;height:21px;border-radius:0 0 0 0;"></div>
<svg style="left:1402px;top:428.5px" width="4" height="7" viewBox="0 0 4 7"><path d="M3.5 0 L3.5 7 L0 3.5Z" fill="#6e6e6e"/></svg>
<svg style="left:1471px;top:428.5px" width="4" height="7" viewBox="0 0 4 7"><path d="M0.5 0 L0.5 7 L4 3.5Z" fill="#6e6e6e"/></svg>
<span class="t n" style="top:421.5px;letter-spacing:-0.38px;left:1288.5px;width:300px;text-align:center;">Y:1080 px</span>
<div class="b num" style="left:1396px;top:441px;width:85px;height:21px;border-radius:0 0 10px 10px;background:linear-gradient(90deg,#7c7c7c 0,#848484 50%,transparent 50%),linear-gradient(#a0a0a0,#b6b6b6)"></div>
<span class="t n" style="top:441.5px;letter-spacing:-0.15px;right:134px;text-align:right;">50%</span>
<div class="b num" style="left:1489px;top:402px;width:86px;height:20px;border-radius:10px 10px 0 0;"></div>
<svg style="left:1495px;top:408.5px" width="4" height="7" viewBox="0 0 4 7"><path d="M3.5 0 L3.5 7 L0 3.5Z" fill="#6e6e6e"/></svg>
<svg style="left:1565px;top:408.5px" width="4" height="7" viewBox="0 0 4 7"><path d="M0.5 0 L0.5 7 L4 3.5Z" fill="#6e6e6e"/></svg>
<span class="t n" style="top:402.5px;letter-spacing:-0.51px;left:1382px;width:300px;text-align:center;">Start Fra:1</span>
<div class="b num" style="left:1489px;top:421px;width:86px;height:21px;border-radius:0 0 0 0;"></div>
<svg style="left:1495px;top:428.5px" width="4" height="7" viewBox="0 0 4 7"><path d="M3.5 0 L3.5 7 L0 3.5Z" fill="#6e6e6e"/></svg>
<svg style="left:1565px;top:428.5px" width="4" height="7" viewBox="0 0 4 7"><path d="M0.5 0 L0.5 7 L4 3.5Z" fill="#6e6e6e"/></svg>
<span class="t n" style="top:421.5px;letter-spacing:-0.49px;left:1382px;width:300px;text-align:center;">End F: 250</span>
<div class="b num" style="left:1489px;top:441px;width:86px;height:21px;border-radius:0 0 10px 10px;"></div>
<svg style="left:1495px;top:448.5px" width="4" height="7" viewBox="0 0 4 7"><path d="M3.5 0 L3.5 7 L0 3.5Z" fill="#6e6e6e"/></svg>
<svg style="left:1565px;top:448.5px" width="4" height="7" viewBox="0 0 4 7"><path d="M0.5 0 L0.5 7 L4 3.5Z" fill="#6e6e6e"/></svg>
<span class="t n" style="top:441.5px;letter-spacing:-0.58px;left:1382px;width:300px;text-align:center;">Frame S: 1</span>
<span class="t ts" style="top:462.5px;letter-spacing:-0.54px;left:1403px;">Aspect Ratio:</span>
<span class="t ts" style="top:462.5px;letter-spacing:-0.61px;left:1497px;">Frame Rate:</span>
<div class="b num" style="left:1396px;top:481px;width:85px;height:20px;border-radius:10px 10px 0 0;"></div>
<svg style="left:1402px;top:487.5px" width="4" height="7" viewBox="0 0 4 7"><path d="M3.5 0 L3.5 7 L0 3.5Z" fill="#6e6e6e"/></svg>
<svg style="left:1471px;top:487.5px" width="4" height="7" viewBox="0 0 4 7"><path d="M0.5 0 L0.5 7 L4 3.5Z" fill="#6e6e6e"/></svg>
<span class="t " style="top:482.5px;letter-spacing:-0.62px;left:1411px;">X:</span>
<span class="t n" style="top:482.5px;letter-spacing:-0.10px;right:135px;text-align:right;">1.000</span>
<div class="b num" style="left:1396px;top:500px;width:85px;height:21px;border-radius:0 0 10px 10px;"></div>
<svg style="left:1402px;top:507.5px" width="4" height="7" viewBox="0 0 4 7"><path d="M3.5 0 L3.5 7 L0 3.5Z" fill="#6e6e6e"/></svg>
<svg style="left:1471px;top:507.5px" width="4" height="7" viewBox="0 0 4 7"><path d="M0.5 0 L0.5 7 L4 3.5Z" fill="#6e6e6e"/></svg>
<span class="t " style="top:501.5px;letter-spacing:-0.71px;left:1411px;">Y:</span>
<span class="t n" style="top:501.5px;letter-spacing:-0.10px;right:135px;text-align:right;">1.000</span>
<div class="b menu" style="left:1489px;top:481px;width:86px;height:20px;"></div>
<span class="t w" style="top:482.5px;letter-spacing:-0.51px;left:1497px;">24 fps</span>
<svg style="left:1563.5px;top:484px" width="8" height="14" viewBox="0 0 8 14"><path d="M4 .500 L6.800 5.800 L1.200 5.800Z M4 13.400 L6.800 8.200 L1.200 8.200Z" fill="#b4b4b4"/></svg>
<span class="t ts" style="top:502.5px;letter-spacing:-0.65px;left:1497px;width:84px;overflow:hidden;">Time Remapp...</span>
<div class="chk" style="left:1399px;top:526px;"></div>
<span class="t ts" style="top:525px;letter-spacing:-0.55px;left:1421px;">B</span>
<div class="chk" style="left:1445px;top:526px;opacity:0.5;"></div>
<span class="t " style="top:525px;letter-spacing:-0.60px;left:1467px;color:#444;opacity:.8">Cr</span>
<div class="b num" style="left:1489px;top:521px;width:86px;height:20px;border-radius:10px;"></div>
<div class="a" style="left:1531px;top:522px;width:1px;height:18px;background:#262626;"></div>
<svg style="left:1495px;top:527.5px" width="4" height="7" viewBox="0 0 4 7"><path d="M3.5 0 L3.5 7 L0 3.5Z" fill="#6e6e6e"/></svg>
<svg style="left:1522px;top:527.5px" width="4" height="7" viewBox="0 0 4 7"><path d="M0.5 0 L0.5 7 L4 3.5Z" fill="#6e6e6e"/></svg>
<svg style="left:1537px;top:527.5px" width="4" height="7" viewBox="0 0 4 7"><path d="M3.5 0 L3.5 7 L0 3.5Z" fill="#6e6e6e"/></svg>
<svg style="left:1565px;top:527.5px" width="4" height="7" viewBox="0 0 4 7"><path d="M0.5 0 L0.5 7 L4 3.5Z" fill="#6e6e6e"/></svg>
<span class="t n" style="top:522.5px;letter-spacing:0.00px;left:1359.5px;width:300px;text-align:center;">10</span>
<span class="t n" style="top:522.5px;letter-spacing:0.00px;left:1402.5px;width:300px;text-align:center;">10</span>
<div class="a" style="left:1393px;top:550px;width:185px;height:1px;background:#404040;"></div>
<div class="a" style="left:1393px;top:551px;width:185px;height:1px;background:#858585;"></div>
<svg style="left:1401px;top:559px" width="9" height="9" viewBox="0 0 9 9"><path d="M0 0 L8.5 0 L4.25 8.5Z" fill="#1a1a1a"/></svg>
<div class="chk" style="left:1413px;top:556px;"></div>
<svg style="left:1413px;top:556px" width="14" height="14" viewBox="0 0 14 14"><path d="M3 7.300 L6.200 11.200 L12.800 1.800" fill="none" stroke="#e0e0e0" stroke-width="1.700"/></svg>
<span class="t pt ts" style="top:553px;letter-spacing:-0.40px;left:1433px;">Anti-Aliasing</span>
<svg style="left:1562px;top:563px" width="11" height="6" viewBox="0 0 11 6"><rect x="0" y="0" width="1" height="1" fill="#d8d8d8"/><rect x="0" y="1" width="1" height="1" fill="#3a3a3a"/><rect x="0" y="3" width="1" height="1" fill="#d8d8d8"/><rect x="0" y="4" width="1" height="1" fill="#3a3a3a"/><rect x="3" y="0" width="1" height="1" fill="#d8d8d8"/><rect x="3" y="1" width="1" height="1" fill="#3a3a3a"/><rect x="3" y="3" width="1" height="1" fill="#d8d8d8"/><rect x="3" y="4" width="1" height="1" fill="#3a3a3a"/><rect x="6" y="0" width="1" height="1" fill="#d8d8d8"/><rect x="6" y="1" width="1" height="1" fill="#3a3a3a"/><rect x="6" y="3" width="1" height="1" fill="#d8d8d8"/><rect x="6" y="4" width="1" height="1" fill="#3a3a3a"/><rect x="9" y="0" width="1" height="1" fill="#d8d8d8"/><rect x="9" y="1" width="1" height="1" fill="#3a3a3a"/><rect x="9" y="3" width="1" height="1" fill="#d8d8d8"/><rect x="9" y="4" width="1" height="1" fill="#3a3a3a"/></svg>
<div class="b rad" style="left:1396px;top:583px;width:85px;height:20px;"></div>
<div class="a sel" style="left:1417px;top:584px;width:20px;height:18px"></div>
<div class="a" style="left:1416px;top:584px;width:1px;height:18px;background:#262626;"></div>
<div class="a" style="left:1437px;top:584px;width:1px;height:18px;background:#262626;"></div>
<div class="a" style="left:1458px;top:584px;width:1px;height:18px;background:#262626;"></div>
<span class="t w n" style="top:584.5px;letter-spacing:0.00px;left:1256.5px;width:300px;text-align:center;">5</span>
<span class="t n" style="top:584.5px;letter-spacing:0.00px;left:1277px;width:300px;text-align:center;">8</span>
<span class="t w n" style="top:584.5px;letter-spacing:0.00px;left:1298px;width:300px;text-align:center;">11</span>
<span class="t w n" style="top:584.5px;letter-spacing:0.00px;left:1319.5px;width:300px;text-align:center;">16</span>
<div class="b menu" style="left:1489px;top:583px;width:86px;height:20px;"></div>
<span class="t w" style="top:584.5px;letter-spacing:-0.44px;left:1497px;width:70px;overflow:hidden;">Mitchell-Ne...</span>
<svg style="left:1563.5px;top:586px" width="8" height="14" viewBox="0 0 8 14"><path d="M4 .500 L6.800 5.800 L1.200 5.800Z M4 13.400 L6.800 8.200 L1.200 8.200Z" fill="#b4b4b4"/></svg>
<div class="chk" style="left:1399px;top:608px;"></div>
<span class="t ts" style="top:607px;letter-spacing:-0.53px;left:1421px;">Full Sam...</span>
<div class="b num" style="left:1489px;top:605px;width:86px;height:20px;border-radius:10px;"></div>
<svg style="left:1495px;top:611.5px" width="4" height="7" viewBox="0 0 4 7"><path d="M3.5 0 L3.5 7 L0 3.5Z" fill="#6e6e6e"/></svg>
<svg style="left:1565px;top:611.5px" width="4" height="7" viewBox="0 0 4 7"><path d="M0.5 0 L0.5 7 L4 3.5Z" fill="#6e6e6e"/></svg>
<span class="t n" style="top:606.5px;letter-spacing:-0.37px;left:1382px;width:300px;text-align:center;">: 1.000 px</span>
<div class="a" style="left:1393px;top:632px;width:185px;height:1px;background:#404040;"></div>
<div class="a" style="left:1393px;top:633px;width:185px;height:1px;background:#858585;"></div>
<svg style="left:1400.5px;top:641px" width="9" height="9" viewBox="0 0 9 9"><path d="M0 0 L8.500 4.250 L0 8.500Z" fill="#1a1a1a"/></svg>
<div class="chk" style="left:1413px;top:638px;"></div>
<span class="t pt ts" style="top:635px;letter-spacing:-0.53px;left:1433px;">Sampled Motion Blur</span>
<svg style="left:1562px;top:645px" width="11" height="6" viewBox="0 0 11 6"><rect x="0" y="0" width="1" height="1" fill="#d8d8d8"/><rect x="0" y="1" width="1" height="1" fill="#3a3a3a"/><rect x="0" y="3" width="1" height="1" fill="#d8d8d8"/><rect x="0" y="4" width="1" height="1" fill="#3a3a3a"/><rect x="3" y="0" width="1" height="1" fill="#d8d8d8"/><rect x="3" y="1" width="1" height="1" fill="#3a3a3a"/><rect x="3" y="3" width="1" height="1" fill="#d8d8d8"/><rect x="3" y="4" width="1" height="1" fill="#3a3a3a"/><rect x="6" y="0" width="1" height="1" fill="#d8d8d8"/><rect x="6" y="1" width="1" height="1" fill="#3a3a3a"/><rect x="6" y="3" width="1" height="1" fill="#d8d8d8"/><rect x="6" y="4" width="1" height="1" fill="#3a3a3a"/><rect x="9" y="0" width="1" height="1" fill="#d8d8d8"/><rect x="9" y="1" width="1" height="1" fill="#3a3a3a"/><rect x="9" y="3" width="1" height="1" fill="#d8d8d8"/><rect x="9" y="4" width="1" height="1" fill="#3a3a3a"/></svg>
<div class="a" style="left:1393px;top:656px;width:185px;height:1px;background:#404040;"></div>
<div class="a" style="left:1393px;top:657px;width:185px;height:1px;background:#858585;"></div>
<svg style="left:1400.5px;top:665px" width="9" height="9" viewBox="0 0 9 9"><path d="M0 0 L8.500 4.250 L0 8.500Z" fill="#1a1a1a"/></svg>
<span class="t pt ts" style="top:659px;letter-spacing:-0.54px;left:1413px;">Shading</span>
<svg style="left:1562px;top:669px" width="11" height="6" viewBox="0 0 11 6"><rect x="0" y="0" width="1" height="1" fill="#d8d8d8"/><rect x="0" y="1" width="1" height="1" fill="#3a3a3a"/><rect x="0" y="3" width="1" height="1" fill="#d8d8d8"/><rect x="0" y="4" width="1" height="1" fill="#3a3a3a"/><rect x="3" y="0" width="1" height="1" fill="#d8d8d8"/><rect x="3" y="1" width="1" height="1" fill="#3a3a3a"/><rect x="3" y="3" width="1" height="1" fill="#d8d8d8"/><rect x="3" y="4" width="1" height="1" fill="#3a3a3a"/><rect x="6" y="0" width="1" height="1" fill="#d8d8d8"/><rect x="6" y="1" width="1" height="1" fill="#3a3a3a"/><rect x="6" y="3" width="1" height="1" fill="#d8d8d8"/><rect x="6" y="4" width="1" height="1" fill="#3a3a3a"/><rect x="9" y="0" width="1" height="1" fill="#d8d8d8"/><rect x="9" y="1" width="1" height="1" fill="#3a3a3a"/><rect x="9" y="3" width="1" height="1" fill="#d8d8d8"/><rect x="9" y="4" width="1" height="1" fill="#3a3a3a"/></svg>
<div class="a" style="left:1393px;top:680px;width:185px;height:1px;background:#404040;"></div>
<div class="a" style="left:1393px;top:681px;width:185px;height:1px;background:#858585;"></div>
<svg style="left:1400.5px;top:689px" width="9" height="9" viewBox="0 0 9 9"><path d="M0 0 L8.500 4.250 L0 8.500Z" fill="#1a1a1a"/></svg>
<span class="t pt ts" style="top:683px;letter-spacing:-0.52px;left:1413px;">Performance</span>
<svg style="left:1562px;top:693px" width="11" height="6" viewBox="0 0 11 6"><rect x="0" y="0" width="1" height="1" fill="#d8d8d8"/><rect x="0" y="1" width="1" height="1" fill="#3a3a3a"/><rect x="0" y="3" width="1" height="1" fill="#d8d8d8"/><rect x="0" y="4" width="1" height="1" fill="#3a3a3a"/><rect x="3" y="0" width="1" height="1" fill="#d8d8d8"/><rect x="3" y="1" width="1" height="1" fill="#3a3a3a"/><rect x="3" y="3" width="1" height="1" fill="#d8d8d8"/><rect x="3" y="4" width="1" height="1" fill="#3a3a3a"/><rect x="6" y="0" width="1" height="1" fill="#d8d8d8"/><rect x="6" y="1" width="1" height="1" fill="#3a3a3a"/><rect x="6" y="3" width="1" height="1" fill="#d8d8d8"/><rect x="6" y="4" width="1" height="1" fill="#3a3a3a"/><rect x="9" y="0" width="1" height="1" fill="#d8d8d8"/><rect x="9" y="1" width="1" height="1" fill="#3a3a3a"/><rect x="9" y="3" width="1" height="1" fill="#d8d8d8"/><rect x="9" y="4" width="1" height="1" fill="#3a3a3a"/></svg>
<div class="a" style="left:1393px;top:704px;width:185px;height:1px;background:#404040;"></div>
<div class="a" style="left:1393px;top:705px;width:185px;height:1px;background:#858585;"></div>
<svg style="left:1400.5px;top:713px" width="9" height="9" viewBox="0 0 9 9"><path d="M0 0 L8.500 4.250 L0 8.500Z" fill="#1a1a1a"/></svg>
<span class="t pt ts" style="top:707px;letter-spacing:-0.46px;left:1413px;">Post Processing</span>
<svg style="left:1562px;top:717px" width="11" height="6" viewBox="0 0 11 6"><rect x="0" y="0" width="1" height="1" fill="#d8d8d8"/><rect x="0" y="1" width="1" height="1" fill="#3a3a3a"/><rect x="0" y="3" width="1" height="1" fill="#d8d8d8"/><rect x="0" y="4" width="1" height="1" fill="#3a3a3a"/><rect x="3" y="0" width="1" height="1" fill="#d8d8d8"/><rect x="3" y="1" width="1" height="1" fill="#3a3a3a"/><rect x="3" y="3" width="1" height="1" fill="#d8d8d8"/><rect x="3" y="4" width="1" height="1" fill="#3a3a3a"/><rect x="6" y="0" width="1" height="1" fill="#d8d8d8"/><rect x="6" y="1" width="1" height="1" fill="#3a3a3a"/><rect x="6" y="3" width="1" height="1" fill="#d8d8d8"/><rect x="6" y="4" width="1" height="1" fill="#3a3a3a"/><rect x="9" y="0" width="1" height="1" fill="#d8d8d8"/><rect x="9" y="1" width="1" height="1" fill="#3a3a3a"/><rect x="9" y="3" width="1" height="1" fill="#d8d8d8"/><rect x="9" y="4" width="1" height="1" fill="#3a3a3a"/></svg>
<div class="a" style="left:1393px;top:728px;width:185px;height:1px;background:#404040;"></div>
<div class="a" style="left:1393px;top:729px;width:185px;height:1px;background:#858585;"></div>
<svg style="left:1400.5px;top:737px" width="9" height="9" viewBox="0 0 9 9"><path d="M0 0 L8.500 4.250 L0 8.500Z" fill="#1a1a1a"/></svg>
<span class="t pt ts" style="top:731px;letter-spacing:-0.48px;left:1413px;">Metadata</span>
<svg style="left:1562px;top:741px" width="11" height="6" viewBox="0 0 11 6"><rect x="0" y="0" width="1" height="1" fill="#d8d8d8"/><rect x="0" y="1" width="1" height="1" fill="#3a3a3a"/><rect x="0" y="3" width="1" height="1" fill="#d8d8d8"/><rect x="0" y="4" width="1" height="1" fill="#3a3a3a"/><rect x="3" y="0" width="1" height="1" fill="#d8d8d8"/><rect x="3" y="1" width="1" height="1" fill="#3a3a3a"/><rect x="3" y="3" width="1" height="1" fill="#d8d8d8"/><rect x="3" y="4" width="1" height="1" fill="#3a3a3a"/><rect x="6" y="0" width="1" height="1" fill="#d8d8d8"/><rect x="6" y="1" width="1" height="1" fill="#3a3a3a"/><rect x="6" y="3" width="1" height="1" fill="#d8d8d8"/><rect x="6" y="4" width="1" height="1" fill="#3a3a3a"/><rect x="9" y="0" width="1" height="1" fill="#d8d8d8"/><rect x="9" y="1" width="1" height="1" fill="#3a3a3a"/><rect x="9" y="3" width="1" height="1" fill="#d8d8d8"/><rect x="9" y="4" width="1" height="1" fill="#3a3a3a"/></svg>
<div class="a" style="left:1393px;top:752px;width:185px;height:1px;background:#404040;"></div>
<div class="a" style="left:1393px;top:753px;width:185px;height:1px;background:#858585;"></div>
<svg style="left:1401px;top:761px" width="9" height="9" viewBox="0 0 9 9"><path d="M0 0 L8.5 0 L4.25 8.5Z" fill="#1a1a1a"/></svg>
<span class="t pt ts" style="top:755px;letter-spacing:-0.61px;left:1413px;">Output</span>
<svg style="left:1562px;top:765px" width="11" height="6" viewBox="0 0 11 6"><rect x="0" y="0" width="1" height="1" fill="#d8d8d8"/><rect x="0" y="1" width="1" height="1" fill="#3a3a3a"/><rect x="0" y="3" width="1" height="1" fill="#d8d8d8"/><rect x="0" y="4" width="1" height="1" fill="#3a3a3a"/><rect x="3" y="0" width="1" height="1" fill="#d8d8d8"/><rect x="3" y="1" width="1" height="1" fill="#3a3a3a"/><rect x="3" y="3" width="1" height="1" fill="#d8d8d8"/><rect x="3" y="4" width="1" height="1" fill="#3a3a3a"/><rect x="6" y="0" width="1" height="1" fill="#d8d8d8"/><rect x="6" y="1" width="1" height="1" fill="#3a3a3a"/><rect x="6" y="3" width="1" height="1" fill="#d8d8d8"/><rect x="6" y="4" width="1" height="1" fill="#3a3a3a"/><rect x="9" y="0" width="1" height="1" fill="#d8d8d8"/><rect x="9" y="1" width="1" height="1" fill="#3a3a3a"/><rect x="9" y="3" width="1" height="1" fill="#d8d8d8"/><rect x="9" y="4" width="1" height="1" fill="#3a3a3a"/></svg>
<div class="b txt" style="left:1396px;top:785px;width:179px;height:20px;"></div>
<span class="t " style="top:786.5px;letter-spacing:-0.68px;left:1403px;">/tmp/</span>
<div class="b tool" style="left:1554px;top:785px;width:21px;height:20px;border-radius:0 4px 4px 0;"></div>
<svg style="left:1556px;top:787px" width="16" height="16" viewBox="0 0 16 16"><path d="M1.500 5.500h4l1-1.500h7.500v10.500h-12.500z" fill="#e8dc9a" stroke="#333" stroke-width="1"/><rect x="8" y="1.500" width="6" height="5" fill="#f4f4f4" stroke="#333" stroke-width=".9"/><path d="M9.500 3h3M9.500 4.500h3" stroke="#555" stroke-width=".7"/><path d="M1.500 8.500h12.500v6h-12.500z" fill="#efe6a8" stroke="#333" stroke-width="1"/></svg>
<div class="chk" style="left:1399px;top:813px;"></div>
<svg style="left:1399px;top:813px" width="14" height="14" viewBox="0 0 14 14"><path d="M3 7.300 L6.200 11.200 L12.800 1.800" fill="none" stroke="#e0e0e0" stroke-width="1.700"/></svg>
<span class="t w" style="top:812px;letter-spacing:-0.46px;left:1421px;">Overwrite</span>
<div class="chk" style="left:1492px;top:813px;"></div>
<svg style="left:1492px;top:813px" width="14" height="14" viewBox="0 0 14 14"><path d="M3 7.300 L6.200 11.200 L12.800 1.800" fill="none" stroke="#e0e0e0" stroke-width="1.700"/></svg>
<span class="t w" style="top:812px;letter-spacing:-0.48px;left:1514px;">File Exte...</span>
<div class="chk" style="left:1399px;top:835px;"></div>
<span class="t ts" style="top:834px;letter-spacing:-0.50px;left:1421px;">Placehol...</span>
<div class="chk" style="left:1492px;top:835px;"></div>
<span class="t ts" style="top:834px;letter-spacing:-0.60px;left:1514px;">Cache Re...</span>
<div class="b menu" style="left:1396px;top:857px;width:85px;height:20px;"></div>
<svg style="left:1400px;top:859px" width="16" height="16" viewBox="0 0 16 16"><rect x="2" y="1" width="12" height="14" fill="#f2f2f2" stroke="#333" stroke-width="1"/><rect x="3.500" y="3" width="9" height="5" fill="#e85a6a"/><rect x="3.500" y="8" width="9" height="4" fill="#4a5ab0"/><circle cx="6" cy="6.500" r="1.600" fill="#f8e0c0"/><path d="M11 1l3 3h-3z" fill="#bbb" stroke="#333" stroke-width=".6"/></svg>
<span class="t w" style="top:858.5px;letter-spacing:-0.46px;left:1419px;">PNG</span>
<svg style="left:1469.5px;top:860px" width="8" height="14" viewBox="0 0 8 14"><path d="M4 .500 L6.800 5.800 L1.200 5.800Z M4 13.400 L6.800 8.200 L1.200 8.200Z" fill="#b4b4b4"/></svg>
<div class="b rad" style="left:1489px;top:857px;width:86px;height:20px;"></div>
<div class="a sel" style="left:1545px;top:858px;width:29px;height:18px;border-radius:0 3px 3px 0"></div>
<div class="a" style="left:1516px;top:858px;width:1px;height:18px;background:#262626;"></div>
<div class="a" style="left:1544px;top:858px;width:1px;height:18px;background:#262626;"></div>
<span class="t w" style="top:858.5px;letter-spacing:-0.71px;left:1353px;width:300px;text-align:center;">BW</span>
<span class="t w" style="top:858.5px;letter-spacing:-0.57px;left:1380.5px;width:300px;text-align:center;">RGB</span>
<span class="t " style="top:858.5px;letter-spacing:-0.56px;left:1546px;width:28px;overflow:hidden;">RGBA</span>
<span class="t ts" style="top:881px;letter-spacing:-0.60px;left:1403px;">Color Dep</span>
<div class="b rad" style="left:1461px;top:879px;width:114px;height:20px;"></div>
<div class="a sel" style="left:1462px;top:880px;width:55px;height:18px;border-radius:3px 0 0 3px"></div>
<div class="a" style="left:1517px;top:880px;width:1px;height:18px;background:#262626;"></div>
<span class="t n" style="top:880.5px;letter-spacing:0.00px;left:1339.5px;width:300px;text-align:center;">8</span>
<span class="t w n" style="top:880.5px;letter-spacing:0.00px;left:1396px;width:300px;text-align:center;">16</span>
<div class="a" style="left:1583px;top:208px;width:13px;height:688px;border-radius:6.500px;background:linear-gradient(90deg,#5a5a5a,#686868);border:1px solid #575757"></div>
<div class="a" style="left:1583px;top:208px;width:13px;height:618px;border-radius:6.500px;background:linear-gradient(90deg,#9a9a9a,#787878);border:1px solid #444"></div>
<div class="b menu" style="left:9px;top:793px;width:30px;height:20px;border-radius:5px;"></div>
<svg style="left:12px;top:795px" width="16" height="16" viewBox="0 0 16 16"><path d="M1.500 3.500 L8.500 1.500 L14.500 3.500 L14.500 12 L8 15 L1.500 12Z" fill="#f4f4f4" stroke="#222" stroke-width="1"/><path d="M8 6 L14.500 3.500 L14.500 12 L8 15Z" fill="#8a8a8a"/><path d="M1.500 3.500 L8 6 L8 15" fill="none" stroke="#222" stroke-width=".8"/><path d="M8 6 L14.500 3.500" stroke="#222" stroke-width=".8"/></svg>
<svg style="left:27.5px;top:796.5px" width="8" height="14" viewBox="0 0 8 14"><path d="M4 .500 L6.800 5.800 L1.200 5.800Z M4 13.400 L6.800 8.200 L1.200 8.200Z" fill="#b4b4b4"/></svg>
<span class="t " style="top:795px;letter-spacing:-0.34px;left:51px;">View</span>
<span class="t " style="top:795px;letter-spacing:-0.49px;left:96px;">Select</span>
<span class="t " style="top:795px;letter-spacing:-0.83px;left:147px;">Add</span>
<span class="t " style="top:795px;letter-spacing:-0.47px;left:186px;">Object</span>
<div class="b menu" style="left:232px;top:793px;width:113px;height:20px;border-radius:5px;"></div>
<svg style="left:236px;top:795px" width="16" height="16" viewBox="0 0 16 16"><g opacity="1"><path d="M8.300 1.500 L14.300 4.500 L8.300 7.500 L2.300 4.500Z" fill="#f6cf9c"/><path d="M2.300 4.500 L8.300 7.500 L8.300 14.300 L2.300 11Z" fill="#e8963a"/><path d="M8.300 7.500 L14.300 4.500 L14.300 11 L8.300 14.300Z" fill="#c67a22"/><path d="M3.100 10.600 L3.100 5.200 L8.300 7.800 L13.600 5.200 M8.300 7.800 L8.300 13" fill="none" stroke="#fff" stroke-width="1.100" opacity=".92"/><path d="M8.300 1.500 L14.300 4.500 L14.300 11 L8.300 14.300 L2.300 11 L2.300 4.500Z" fill="none" stroke="#3a2206" stroke-width="1.100" stroke-linejoin="round"/></g></svg>
<span class="t w" style="top:795px;letter-spacing:-0.57px;left:256px;">Object Mode</span>
<svg style="left:333.5px;top:796.5px" width="8" height="14" viewBox="0 0 8 14"><path d="M4 .500 L6.800 5.800 L1.200 5.800Z M4 13.400 L6.800 8.200 L1.200 8.200Z" fill="#b4b4b4"/></svg>
<div class="b menu" style="left:350px;top:793px;width:35px;height:20px;border-radius:5px;"></div>
<svg style="left:354px;top:795px" width="16" height="16" viewBox="0 0 16 16"><defs><radialGradient id="sg" cx=".35" cy=".3" r=".8"><stop offset="0" stop-color="#fff"/><stop offset=".7" stop-color="#e0e0e0"/><stop offset="1" stop-color="#999"/></radialGradient></defs><circle cx="8" cy="8" r="6.500" fill="url(#sg)" stroke="#222" stroke-width="1"/></svg>
<svg style="left:373.5px;top:796.5px" width="8" height="14" viewBox="0 0 8 14"><path d="M4 .500 L6.800 5.800 L1.200 5.800Z M4 13.400 L6.800 8.200 L1.200 8.200Z" fill="#b4b4b4"/></svg>
<div class="b tool" style="left:390px;top:793px;width:55px;height:20px;border-radius:5px;"></div>
<div class="b menu" style="left:390px;top:793px;width:35px;height:20px;border-radius:5px 0 0 5px;"></div>
<svg style="left:393px;top:795px" width="18" height="16" viewBox="0 0 18 16"><circle cx="6" cy="5.500" r="4.500" fill="#f2f2f2" stroke="#222" stroke-width=".9"/><circle cx="11.500" cy="10.500" r="4.500" fill="#f2f2f2" stroke="#222" stroke-width=".9"/><rect x="7.300" y="6.500" width="3.200" height="3.200" fill="#fff" stroke="#2060e0" stroke-width="1.200"/></svg>
<svg style="left:413.5px;top:796.5px" width="8" height="14" viewBox="0 0 8 14"><path d="M4 .500 L6.800 5.800 L1.200 5.800Z M4 13.400 L6.800 8.200 L1.200 8.200Z" fill="#b4b4b4"/></svg>
<svg style="left:426.5px;top:795px" width="16" height="16" viewBox="0 0 16 16"><g fill="#fff" stroke="#2a4a9a" stroke-width=".8"><circle cx="3" cy="2.800" r="1.500"/><circle cx="8" cy="2.800" r="1.500"/><circle cx="13" cy="2.800" r="1.500"/></g><path d="M1 10.500h14" stroke="#222" stroke-width="3"/><path d="M1 10.500l4-4v8zM15 10.500l-4-4v8z" fill="#222"/><path d="M2.500 10.500h11" stroke="#fff" stroke-width="1.300"/><path d="M2.300 10.500l2.200-2.200v4.400zM13.700 10.500l-2.200-2.200v4.400z" fill="#fff"/></svg>
<div class="b rad" style="left:450px;top:793px;width:152px;height:20px;border-radius:5px;"></div>
<div class="a sel" style="left:470px;top:794px;width:19px;height:18px"></div>
<div class="a" style="left:469px;top:794px;width:1px;height:18px;background:#262626;"></div>
<div class="a" style="left:489px;top:794px;width:1px;height:18px;background:#262626;"></div>
<div class="a" style="left:509px;top:794px;width:1px;height:18px;background:#262626;"></div>
<div class="a" style="left:529px;top:794px;width:1px;height:18px;background:#262626;"></div>
<svg style="left:452px;top:795px" width="16" height="16" viewBox="0 0 16 16"><path d="M8 9.500 L8 1.500" stroke="#16336e" stroke-width="3"/><path d="M8 9.500 L8 1.500" stroke="#5a8af0" stroke-width="1.600"/><path d="M8 9.500 L2 14" stroke="#6e1616" stroke-width="3"/><path d="M8 9.500 L2 14" stroke="#e04040" stroke-width="1.600"/><path d="M8 9.500 L14 14" stroke="#166e16" stroke-width="3"/><path d="M8 9.500 L14 14" stroke="#40d040" stroke-width="1.600"/><circle cx="8" cy="1.800" r="1.200" fill="#fff"/><circle cx="2" cy="14" r="1.200" fill="#fff"/><circle cx="14" cy="14" r="1.200" fill="#fff"/></svg>
<svg style="left:471.5px;top:795px" width="16" height="16" viewBox="0 0 16 16"><path d="M2 14 L10.500 5.500" stroke="#16336e" stroke-width="3.400" stroke-linecap="round"/><path d="M14.500 1.500 L13 9 L7 3Z" fill="#8ab0f0" stroke="#16336e" stroke-width="1" stroke-linejoin="round"/><path d="M2 14 L10.500 5.500" stroke="#8ab0f0" stroke-width="1.700" stroke-linecap="round"/></svg>
<svg style="left:491.5px;top:795px" width="16" height="16" viewBox="0 0 16 16"><path d="M2.500 14 A11 11 0 0 1 13.500 3" fill="none" stroke="#23375e" stroke-width="3.400" stroke-linecap="round"/><path d="M2.500 14 A11 11 0 0 1 13.500 3" fill="none" stroke="#5a7ab8" stroke-width="1.800" stroke-linecap="round"/></svg>
<svg style="left:511.5px;top:795px" width="16" height="16" viewBox="0 0 16 16"><path d="M2 14 L10 6" stroke="#23375e" stroke-width="3.400" stroke-linecap="round"/><path d="M2 14 L10 6" stroke="#5a7ab8" stroke-width="1.800" stroke-linecap="round"/><rect x="8.500" y="1.500" width="6" height="6" fill="#5a7ab8" stroke="#23375e" stroke-width="1"/></svg>
<span class="t w" style="top:795px;letter-spacing:-0.51px;left:537px;">Global</span>
<svg style="left:590.5px;top:796.5px" width="8" height="14" viewBox="0 0 8 14"><path d="M4 .500 L6.800 5.800 L1.200 5.800Z M4 13.400 L6.800 8.200 L1.200 8.200Z" fill="#b4b4b4"/></svg>
<div class="b" style="left:607px;top:794px;width:50px;height:19px;border-radius:4px;background:#8c8c8c;border-color:#3a3a3a"></div>
<div class="a" style="left:616.5px;top:795px;width:1px;height:17px;background:#4a4a4a;"></div>
<div class="a" style="left:626.5px;top:795px;width:1px;height:17px;background:#4a4a4a;"></div>
<div class="a" style="left:636.5px;top:795px;width:1px;height:17px;background:#4a4a4a;"></div>
<div class="a" style="left:646.5px;top:795px;width:1px;height:17px;background:#4a4a4a;"></div>
<div class="a" style="left:608px;top:803px;width:48px;height:1px;background:#4a4a4a;"></div>
<div class="b" style="left:662px;top:794px;width:50px;height:19px;border-radius:4px;background:#8c8c8c;border-color:#3a3a3a"></div>
<div class="a" style="left:671.5px;top:795px;width:1px;height:17px;background:#4a4a4a;"></div>
<div class="a" style="left:681.5px;top:795px;width:1px;height:17px;background:#4a4a4a;"></div>
<div class="a" style="left:691.5px;top:795px;width:1px;height:17px;background:#4a4a4a;"></div>
<div class="a" style="left:701.5px;top:795px;width:1px;height:17px;background:#4a4a4a;"></div>
<div class="a" style="left:663px;top:803px;width:48px;height:1px;background:#4a4a4a;"></div>
<svg style="left:609px;top:795px" width="7" height="7"><circle cx="3.500" cy="3.500" r="2.400" fill="#f0a040" stroke="#5a3000" stroke-width=".9"/></svg>
<div class="b tool" style="left:717px;top:793px;width:20px;height:20px;border-radius:5px;background:linear-gradient(#5e5e5e,#747474)"></div>
<svg style="left:718px;top:795px" width="18" height="16" viewBox="0 0 18 16"><defs><linearGradient id="llg" x1="0" y1="0" x2="1" y2="0"><stop offset="0" stop-color="#f4f4f4"/><stop offset="1" stop-color="#8c8c8c"/></linearGradient></defs><rect x="1" y="2" width="10.500" height="10.500" fill="url(#llg)" stroke="#222" stroke-width="1"/><rect x="2.500" y="10.300" width="4" height="1" fill="#fff"/><g fill="none" stroke="#222" stroke-width="2.800"><ellipse cx="13.300" cy="7.300" rx="1.600" ry="2.300"/><ellipse cx="13.300" cy="11.700" rx="1.600" ry="2.300"/></g><g fill="none" stroke="#f2f2f2" stroke-width="1.300"><ellipse cx="13.300" cy="7.300" rx="1.600" ry="2.300"/><ellipse cx="13.300" cy="11.700" rx="1.600" ry="2.300"/></g></svg>
<div class="b tool" style="left:742px;top:793px;width:20px;height:20px;border-radius:5px;"></div>
<svg style="left:744px;top:795px" width="16" height="16" viewBox="0 0 16 16"><g opacity=".55"><circle cx="8" cy="8" r="6" fill="#b4b4b4" stroke="#555" stroke-width="1"/><circle cx="8" cy="8" r="3.600" fill="#c8c8c8" stroke="#666" stroke-width=".9"/><circle cx="8" cy="8" r="1.500" fill="#aaa" stroke="#666" stroke-width=".7"/></g></svg>
<div class="b tool" style="left:767px;top:793px;width:75px;height:20px;border-radius:5px;"></div>
<svg style="left:769px;top:795px" width="16" height="16" viewBox="0 0 16 16"><g transform="rotate(45 8 8)" opacity=".8"><path d="M3 12.500V7a5 5 0 0 1 10 0v5.500h-3V7a2 2 0 0 0-4 0v5.500z" fill="#c0c0c0" stroke="#4a4a4a" stroke-width="1" stroke-linejoin="round"/><path d="M3 10.300h3M10 10.300h3" stroke="#4a4a4a" stroke-width=".9"/></g></svg>
<div class="a menu" style="left:786px;top:794px;width:35px;height:18px"></div>
<svg style="left:788px;top:795px" width="20" height="16" viewBox="0 0 20 16"><path d="M2.500 4v8M17.500 4v8M6 5.500v5M14 5.500v5M2.500 8h15" stroke="#e4e4e4" stroke-width="1"/><path d="M10 1.800v12.400" stroke="#1c4ab8" stroke-width="3.800" stroke-linecap="round"/><path d="M10 2.200v11.600" stroke="#5a90ff" stroke-width="2.400" stroke-linecap="round"/><path d="M10 3v10" stroke="#f0f5ff" stroke-width="1"/></svg>
<svg style="left:810.5px;top:796.5px" width="8" height="14" viewBox="0 0 8 14"><path d="M4 .500 L6.800 5.800 L1.200 5.800Z M4 13.400 L6.800 8.200 L1.200 8.200Z" fill="#b4b4b4"/></svg>
<svg style="left:824px;top:795px" width="16" height="16" viewBox="0 0 16 16"><path d="M4.500 3v12M9.500 3v12M14.500 3v12M1 6.500h15M1 11.500h15" stroke="#2a2a2a" stroke-width="2.400"/><path d="M4.500 3v12M9.500 3v12M14.500 3v12M1 6.500h15M1 11.500h15" stroke="#fafafa" stroke-width="1"/><circle cx="4.500" cy="4.500" r="3.600" fill="#dfe9ff" stroke="#2a56c0" stroke-width="1.300"/><circle cx="4.500" cy="4.500" r="1.400" fill="#2a56c0"/></svg>
<div class="b tool" style="left:847px;top:793px;width:40px;height:20px;border-radius:5px;"></div>
<div class="a" style="left:866px;top:794px;width:1px;height:18px;background:#262626;"></div>
<svg style="left:849px;top:795px" width="16" height="16" viewBox="0 0 16 16"><rect x="3" y="1.800" width="3.400" height="3" rx=".8" fill="#f4f4f4" stroke="#111" stroke-width="1.100"/><rect x="1.500" y="3.800" width="13" height="9.700" rx="1.200" fill="#e2e2e2" stroke="#111" stroke-width="1.300"/><rect x="2.300" y="7" width="4.500" height="5.700" fill="#3a3a3a"/><rect x="2.300" y="4.600" width="11.500" height="2.200" fill="#f2f2f2"/><rect x="11.600" y="5.200" width="2" height="1" fill="#223"/><circle cx="10" cy="9.400" r="3.100" fill="#e8e8e8" stroke="#333" stroke-width=".8"/><circle cx="10" cy="9.400" r="2.200" fill="#2a1a1a"/><path d="M8.100 9.400a1.900 1.900 0 0 1 3.800 0z" fill="#27447e" transform="rotate(-50 10 9.400)"/><path d="M8.100 9.400a1.900 1.900 0 0 0 3.800 0z" fill="#7c2618" transform="rotate(-50 10 9.400)"/><circle cx="4.600" cy="5.700" r=".9" fill="#f01010"/><circle cx="13.300" cy="2.700" r="2.800" fill="#f0d848" opacity=".85"/><path d="M13.300 .4v4.600M11 2.700h4.600" stroke="#fffde0" stroke-width="1.300"/></svg>
<svg style="left:869px;top:795px" width="16" height="16" viewBox="0 0 16 16"><rect x="2" y="7" width="12.500" height="8" fill="#2a2a2a" stroke="#111" stroke-width=".8"/><path d="M2 7 L1.300 4.200 L13.500 1 L14.200 3.800Z" fill="#f0f0f0" stroke="#111" stroke-width=".8"/><path d="M3.500 3.700l1.300 2.600M6.500 2.900l1.300 2.600M9.500 2.100l1.300 2.600" stroke="#111" stroke-width="1.500"/><path d="M3.500 9.500h9.500M3.500 12h9.500" stroke="#888" stroke-width=".9"/><rect x="0" y="5" width="3" height="6" fill="#5a8ad8" opacity=".8"/></svg>
<div class="a" style="left:0px;top:817px;width:1387px;height:40px;background:#727272;"></div>
<div class="a" style="left:0px;top:817px;width:235px;height:40px;background:#454545;"></div>
<div class="a" style="left:1252px;top:817px;width:135px;height:40px;background:#454545;"></div>
<div class="a" style="left:12px;top:817px;width:1px;height:40px;background:#404040;"></div>
<div class="a" style="left:32px;top:817px;width:1px;height:40px;background:#3a3a3a;"></div>
<div class="a" style="left:52px;top:817px;width:1px;height:40px;background:#404040;"></div>
<div class="a" style="left:73px;top:817px;width:1px;height:40px;background:#3a3a3a;"></div>
<div class="a" style="left:93px;top:817px;width:1px;height:40px;background:#404040;"></div>
<div class="a" style="left:113px;top:817px;width:1px;height:40px;background:#3a3a3a;"></div>
<div class="a" style="left:134px;top:817px;width:1px;height:40px;background:#404040;"></div>
<div class="a" style="left:154px;top:817px;width:1px;height:40px;background:#3a3a3a;"></div>
<div class="a" style="left:174px;top:817px;width:1px;height:40px;background:#404040;"></div>
<div class="a" style="left:195px;top:817px;width:1px;height:40px;background:#3a3a3a;"></div>
<div class="a" style="left:215px;top:817px;width:1px;height:40px;background:#404040;"></div>
<div class="a" style="left:236px;top:817px;width:1px;height:40px;background:#5e5e5e;"></div>
<div class="a" style="left:256px;top:817px;width:1px;height:40px;background:#696969;"></div>
<div class="a" style="left:276px;top:817px;width:1px;height:40px;background:#5e5e5e;"></div>
<div class="a" style="left:297px;top:817px;width:1px;height:40px;background:#696969;"></div>
<div class="a" style="left:317px;top:817px;width:1px;height:40px;background:#5e5e5e;"></div>
<div class="a" style="left:337px;top:817px;width:1px;height:40px;background:#696969;"></div>
<div class="a" style="left:358px;top:817px;width:1px;height:40px;background:#5e5e5e;"></div>
<div class="a" style="left:378px;top:817px;width:1px;height:40px;background:#696969;"></div>
<div class="a" style="left:398px;top:817px;width:1px;height:40px;background:#5e5e5e;"></div>
<div class="a" style="left:419px;top:817px;width:1px;height:40px;background:#696969;"></div>
<div class="a" style="left:439px;top:817px;width:1px;height:40px;background:#5e5e5e;"></div>
<div class="a" style="left:459px;top:817px;width:1px;height:40px;background:#696969;"></div>
<div class="a" style="left:480px;top:817px;width:1px;height:40px;background:#5e5e5e;"></div>
<div class="a" style="left:500px;top:817px;width:1px;height:40px;background:#696969;"></div>
<div class="a" style="left:520px;top:817px;width:1px;height:40px;background:#5e5e5e;"></div>
<div class="a" style="left:541px;top:817px;width:1px;height:40px;background:#696969;"></div>
<div class="a" style="left:561px;top:817px;width:1px;height:40px;background:#5e5e5e;"></div>
<div class="a" style="left:581px;top:817px;width:1px;height:40px;background:#696969;"></div>
<div class="a" style="left:602px;top:817px;width:1px;height:40px;background:#5e5e5e;"></div>
<div class="a" style="left:622px;top:817px;width:1px;height:40px;background:#696969;"></div>
<div class="a" style="left:642px;top:817px;width:1px;height:40px;background:#5e5e5e;"></div>
<div class="a" style="left:663px;top:817px;width:1px;height:40px;background:#696969;"></div>
<div class="a" style="left:683px;top:817px;width:1px;height:40px;background:#5e5e5e;"></div>
<div class="a" style="left:703px;top:817px;width:1px;height:40px;background:#696969;"></div>
<div class="a" style="left:724px;top:817px;width:1px;height:40px;background:#5e5e5e;"></div>
<div class="a" style="left:744px;top:817px;width:1px;height:40px;background:#696969;"></div>
<div class="a" style="left:764px;top:817px;width:1px;height:40px;background:#5e5e5e;"></div>
<div class="a" style="left:785px;top:817px;width:1px;height:40px;background:#696969;"></div>
<div class="a" style="left:805px;top:817px;width:1px;height:40px;background:#5e5e5e;"></div>
<div class="a" style="left:825px;top:817px;width:1px;height:40px;background:#696969;"></div>
<div class="a" style="left:846px;top:817px;width:1px;height:40px;background:#5e5e5e;"></div>
<div class="a" style="left:866px;top:817px;width:1px;height:40px;background:#696969;"></div>
<div class="a" style="left:886px;top:817px;width:1px;height:40px;background:#5e5e5e;"></div>
<div class="a" style="left:907px;top:817px;width:1px;height:40px;background:#696969;"></div>
<div class="a" style="left:927px;top:817px;width:1px;height:40px;background:#5e5e5e;"></div>
<div class="a" style="left:947px;top:817px;width:1px;height:40px;background:#696969;"></div>
<div class="a" style="left:968px;top:817px;width:1px;height:40px;background:#5e5e5e;"></div>
<div class="a" style="left:988px;top:817px;width:1px;height:40px;background:#696969;"></div>
<div class="a" style="left:1008px;top:817px;width:1px;height:40px;background:#5e5e5e;"></div>
<div class="a" style="left:1029px;top:817px;width:1px;height:40px;background:#696969;"></div>
<div class="a" style="left:1049px;top:817px;width:1px;height:40px;background:#5e5e5e;"></div>
<div class="a" style="left:1069px;top:817px;width:1px;height:40px;background:#696969;"></div>
<div class="a" style="left:1090px;top:817px;width:1px;height:40px;background:#5e5e5e;"></div>
<div class="a" style="left:1110px;top:817px;width:1px;height:40px;background:#696969;"></div>
<div class="a" style="left:1130px;top:817px;width:1px;height:40px;background:#5e5e5e;"></div>
<div class="a" style="left:1151px;top:817px;width:1px;height:40px;background:#696969;"></div>
<div class="a" style="left:1171px;top:817px;width:1px;height:40px;background:#5e5e5e;"></div>
<div class="a" style="left:1191px;top:817px;width:1px;height:40px;background:#696969;"></div>
<div class="a" style="left:1212px;top:817px;width:1px;height:40px;background:#5e5e5e;"></div>
<div class="a" style="left:1232px;top:817px;width:1px;height:40px;background:#696969;"></div>
<div class="a" style="left:1252px;top:817px;width:1px;height:40px;background:#3a3a3a;"></div>
<div class="a" style="left:1273px;top:817px;width:1px;height:40px;background:#404040;"></div>
<div class="a" style="left:1293px;top:817px;width:1px;height:40px;background:#3a3a3a;"></div>
<div class="a" style="left:1313px;top:817px;width:1px;height:40px;background:#404040;"></div>
<div class="a" style="left:1334px;top:817px;width:1px;height:40px;background:#3a3a3a;"></div>
<div class="a" style="left:1354px;top:817px;width:1px;height:40px;background:#404040;"></div>
<div class="a" style="left:1374px;top:817px;width:1px;height:40px;background:#3a3a3a;"></div>
<div class="a" style="left:235px;top:817px;width:1px;height:40px;background:#1a1a1a;"></div>
<div class="a" style="left:238px;top:817px;width:3px;height:40px;background:#60c040;"></div>
<div class="a" style="left:0px;top:857px;width:1387px;height:16px;background:#707070;"></div>
<div class="a" style="left:4px;top:857px;width:1378px;height:13px;border-radius:6.500px;background:linear-gradient(#949494,#767676);border:1px solid #4a4a4a"></div>
<svg style="left:5px;top:858.500px" width="10" height="10"><circle cx="5" cy="5" r="3.700" fill="#686868"/></svg>
<span class="t n" style="top:855px;letter-spacing:-0.32px;left:-117.2px;width:300px;text-align:center;">-50</span>
<span class="t n" style="top:855px;letter-spacing:-0.32px;left:-76.84px;width:300px;text-align:center;">-40</span>
<span class="t n" style="top:855px;letter-spacing:-0.32px;left:-36.48px;width:300px;text-align:center;">-30</span>
<span class="t n" style="top:855px;letter-spacing:-0.32px;left:3.88px;width:300px;text-align:center;">-20</span>
<span class="t n" style="top:855px;letter-spacing:-0.32px;left:44.24px;width:300px;text-align:center;">-10</span>
<span class="t n" style="top:855px;letter-spacing:0.00px;left:87.4px;width:300px;text-align:center;">0</span>
<span class="t n" style="top:855px;letter-spacing:0.00px;left:127.76px;width:300px;text-align:center;">10</span>
<span class="t n" style="top:855px;letter-spacing:0.00px;left:168.12px;width:300px;text-align:center;">20</span>
<span class="t n" style="top:855px;letter-spacing:0.00px;left:208.48px;width:300px;text-align:center;">30</span>
<span class="t n" style="top:855px;letter-spacing:0.00px;left:248.84px;width:300px;text-align:center;">40</span>
<span class="t n" style="top:855px;letter-spacing:0.00px;left:289.2px;width:300px;text-align:center;">50</span>
<span class="t n" style="top:855px;letter-spacing:0.00px;left:329.56px;width:300px;text-align:center;">60</span>
<span class="t n" style="top:855px;letter-spacing:0.00px;left:369.92px;width:300px;text-align:center;">70</span>
<span class="t n" style="top:855px;letter-spacing:0.00px;left:410.28px;width:300px;text-align:center;">80</span>
<span class="t n" style="top:855px;letter-spacing:0.00px;left:450.64px;width:300px;text-align:center;">90</span>
<span class="t n" style="top:855px;letter-spacing:0.00px;left:491px;width:300px;text-align:center;">100</span>
<span class="t n" style="top:855px;letter-spacing:0.00px;left:531.36px;width:300px;text-align:center;">110</span>
<span class="t n" style="top:855px;letter-spacing:0.00px;left:571.72px;width:300px;text-align:center;">120</span>
<span class="t n" style="top:855px;letter-spacing:0.00px;left:612.08px;width:300px;text-align:center;">130</span>
<span class="t n" style="top:855px;letter-spacing:0.00px;left:652.44px;width:300px;text-align:center;">140</span>
<span class="t n" style="top:855px;letter-spacing:0.00px;left:692.8px;width:300px;text-align:center;">150</span>
<span class="t n" style="top:855px;letter-spacing:0.00px;left:733.16px;width:300px;text-align:center;">160</span>
<span class="t n" style="top:855px;letter-spacing:0.00px;left:773.52px;width:300px;text-align:center;">170</span>
<span class="t n" style="top:855px;letter-spacing:0.00px;left:813.88px;width:300px;text-align:center;">180</span>
<span class="t n" style="top:855px;letter-spacing:0.00px;left:854.24px;width:300px;text-align:center;">190</span>
<span class="t n" style="top:855px;letter-spacing:0.00px;left:894.6px;width:300px;text-align:center;">200</span>
<span class="t n" style="top:855px;letter-spacing:0.00px;left:934.96px;width:300px;text-align:center;">210</span>
<span class="t n" style="top:855px;letter-spacing:0.00px;left:975.32px;width:300px;text-align:center;">220</span>
<span class="t n" style="top:855px;letter-spacing:0.00px;left:1015.68px;width:300px;text-align:center;">230</span>
<span class="t n" style="top:855px;letter-spacing:0.00px;left:1056.04px;width:300px;text-align:center;">240</span>
<span class="t n" style="top:855px;letter-spacing:0.00px;left:1096.4px;width:300px;text-align:center;">250</span>
<span class="t n" style="top:855px;letter-spacing:0.00px;left:1136.76px;width:300px;text-align:center;">260</span>
<span class="t n" style="top:855px;letter-spacing:0.00px;left:1177.12px;width:300px;text-align:center;">270</span>
<span class="t n" style="top:855px;letter-spacing:0.00px;left:1217.48px;width:300px;text-align:center;">280</span>
<div class="a" style="left:0px;top:873px;width:1387px;height:27px;background:#696969;"></div>
<div class="a" style="left:0px;top:873px;width:1387px;height:1px;background:#797979;"></div>
<div class="b menu" style="left:9px;top:877px;width:30px;height:20px;border-radius:5px;"></div>
<svg style="left:12px;top:879px" width="16" height="16" viewBox="0 0 16 16"><defs><linearGradient id="tmg" x1="0" y1="0" x2="1" y2="1"><stop offset="0" stop-color="#fff"/><stop offset="1" stop-color="#cfcfcf"/></linearGradient></defs><circle cx="8" cy="8" r="6.600" fill="url(#tmg)" stroke="#161616" stroke-width="1.200"/><g fill="#999"><circle cx="8" cy="3" r=".5"/><circle cx="13" cy="8" r=".5"/><circle cx="8" cy="13" r=".5"/><circle cx="3" cy="8" r=".5"/></g><path d="M8 8 L10.700 4.400" stroke="#333" stroke-width="1.100"/><path d="M8 8 L10 11" stroke="#d81818" stroke-width="1.500"/></svg>
<svg style="left:27.5px;top:880.5px" width="8" height="14" viewBox="0 0 8 14"><path d="M4 .500 L6.800 5.800 L1.200 5.800Z M4 13.400 L6.800 8.200 L1.200 8.200Z" fill="#b4b4b4"/></svg>
<span class="t " style="top:879px;letter-spacing:-0.34px;left:51px;">View</span>
<span class="t " style="top:879px;letter-spacing:-0.57px;left:96px;">Marker</span>
<span class="t " style="top:879px;letter-spacing:-0.61px;left:151px;">Frame</span>
<span class="t " style="top:879px;letter-spacing:-0.51px;left:203px;">Playback</span>
<div class="b tool" style="left:261px;top:877px;width:40px;height:20px;border-radius:5px;"></div>
<div class="a" style="left:280px;top:878px;width:1px;height:18px;background:#262626;"></div>
<svg style="left:263px;top:879px" width="16" height="16" viewBox="0 0 16 16"><circle cx="8" cy="8" r="6.800" fill="#f4f4f4" stroke="#222" stroke-width="1.100"/><path d="M8 8 L8 1.200 A6.800 6.800 0 0 1 14.800 8Z" fill="#f0a020" stroke="#222" stroke-width=".6"/><path d="M8 8 L5 5" stroke="#222" stroke-width="1.100"/><path d="M8 8 L10.500 12" stroke="#e03030" stroke-width="1.100"/></svg>
<svg style="left:283px;top:879px" width="16" height="16" viewBox="0 0 16 16"><path d="M5 8 V5.500 A3 3 0 0 1 11 5.500 V8" fill="none" stroke="#2a2a2a" stroke-width="2.800"/><path d="M5 8 V5.500 A3 3 0 0 1 11 5.500 V8" fill="none" stroke="#f0f0f0" stroke-width="1.200"/><rect x="3" y="8" width="10" height="6.500" fill="#e9e9ec" stroke="#2a2a2a" stroke-width="1"/><path d="M4 10.500h8M4 12.500h8" stroke="#b8bcc8" stroke-width=".8"/><rect x="7.400" y="10" width="1.200" height="2.600" fill="#222"/></svg>
<div class="b num" style="left:306px;top:877px;width:228px;height:20px;border-radius:10px;"></div>
<div class="a" style="left:422px;top:878px;width:1px;height:18px;background:#262626;"></div>
<svg style="left:312px;top:883.5px" width="4" height="7" viewBox="0 0 4 7"><path d="M3.5 0 L3.5 7 L0 3.5Z" fill="#6e6e6e"/></svg>
<svg style="left:412px;top:883.5px" width="4" height="7" viewBox="0 0 4 7"><path d="M0.5 0 L0.5 7 L4 3.5Z" fill="#6e6e6e"/></svg>
<svg style="left:428px;top:883.5px" width="4" height="7" viewBox="0 0 4 7"><path d="M3.5 0 L3.5 7 L0 3.5Z" fill="#6e6e6e"/></svg>
<svg style="left:524px;top:883.5px" width="4" height="7" viewBox="0 0 4 7"><path d="M0.5 0 L0.5 7 L4 3.5Z" fill="#6e6e6e"/></svg>
<span class="t " style="top:879px;letter-spacing:-0.60px;left:322px;">Start:</span>
<span class="t n" style="top:879px;letter-spacing:0.00px;right:1193px;text-align:right;">1</span>
<span class="t " style="top:879px;letter-spacing:-0.90px;left:438px;">End:</span>
<span class="t n" style="top:879px;letter-spacing:0.00px;right:1082px;text-align:right;">250</span>
<div class="b num" style="left:539px;top:877px;width:90px;height:20px;border-radius:10px;"></div>
<svg style="left:545px;top:883.5px" width="4" height="7" viewBox="0 0 4 7"><path d="M3.5 0 L3.5 7 L0 3.5Z" fill="#6e6e6e"/></svg>
<svg style="left:619px;top:883.5px" width="4" height="7" viewBox="0 0 4 7"><path d="M0.5 0 L0.5 7 L4 3.5Z" fill="#6e6e6e"/></svg>
<span class="t n" style="top:879px;letter-spacing:0.00px;right:987.5px;text-align:right;">1</span>
<div class="b tool" style="left:645px;top:877px;width:120px;height:20px;border-radius:5px;"></div>
<div class="a" style="left:664px;top:878px;width:1px;height:18px;background:#262626;"></div>
<div class="a" style="left:684px;top:878px;width:1px;height:18px;background:#262626;"></div>
<div class="a" style="left:704px;top:878px;width:1px;height:18px;background:#262626;"></div>
<div class="a" style="left:724px;top:878px;width:1px;height:18px;background:#262626;"></div>
<div class="a" style="left:744px;top:878px;width:1px;height:18px;background:#262626;"></div>
<svg style="left:648px;top:880px" width="14" height="14" viewBox="0 0 14 14"><path d="M2.500 2v10" stroke="#1a1a1a" stroke-width="2.600"/><path d="M2.500 2.500v9" stroke="#f4f4f4" stroke-width="1"/><path d="M8 2.500v9l-4.500-4.500zM13 2.500v9l-4.500-4.500z" fill="#f4f4f4" stroke="#1a1a1a" stroke-width="1" stroke-linejoin="round"/></svg>
<svg style="left:668px;top:880px" width="14" height="14" viewBox="0 0 14 14"><path d="M7 2.500v9l-5-4.500zM12.500 2.500v9l-5-4.500z" fill="#f4f4f4" stroke="#1a1a1a" stroke-width="1" stroke-linejoin="round"/></svg>
<svg style="left:687.5px;top:880px" width="14" height="14" viewBox="0 0 14 14"><path d="M11.500 1.500v11l-9-5.500z" fill="#f4f4f4" stroke="#1a1a1a" stroke-width="1" stroke-linejoin="round"/></svg>
<svg style="left:707.5px;top:880px" width="14" height="14" viewBox="0 0 14 14"><path d="M2.500 1.500v11l9-5.500z" fill="#f4f4f4" stroke="#1a1a1a" stroke-width="1" stroke-linejoin="round"/></svg>
<svg style="left:727px;top:880px" width="14" height="14" viewBox="0 0 14 14"><path d="M1.500 2.500v9l5-4.500zM7 2.500v9l5-4.500z" fill="#f4f4f4" stroke="#1a1a1a" stroke-width="1" stroke-linejoin="round"/></svg>
<svg style="left:747px;top:880px" width="14" height="14" viewBox="0 0 14 14"><path d="M1 2.500v9l4.500-4.500zM6 2.500v9l4.500-4.500z" fill="#f4f4f4" stroke="#1a1a1a" stroke-width="1" stroke-linejoin="round"/><path d="M11.500 2v10" stroke="#1a1a1a" stroke-width="2.600"/><path d="M11.500 2.500v9" stroke="#f4f4f4" stroke-width="1"/></svg>
<div class="b menu" style="left:770px;top:877px;width:115px;height:20px;border-radius:5px;"></div>
<span class="t w" style="top:879px;letter-spacing:-0.57px;left:778px;">No Sync</span>
<svg style="left:873.5px;top:880.5px" width="8" height="14" viewBox="0 0 8 14"><path d="M4 .500 L6.800 5.800 L1.200 5.800Z M4 13.400 L6.800 8.200 L1.200 8.200Z" fill="#b4b4b4"/></svg>
<div class="b tool" style="left:901px;top:877px;width:20px;height:20px;border-radius:5px;"></div>
<svg style="left:903px;top:879px" width="16" height="16" viewBox="0 0 16 16"><circle cx="8" cy="8" r="5" fill="#e83a1a" stroke="#7a1a0a" stroke-width="1"/><circle cx="6.800" cy="6.800" r="1.800" fill="#ff7a5a" opacity=".7"/></svg>
<div class="b txt" style="left:926px;top:877px;width:171px;height:20px;border-radius:5px;"></div>
<svg style="left:930px;top:879px" width="18" height="16" viewBox="0 0 18 16"><path d="M5.500 9 V1.500 H8.500" fill="none" stroke="#5a4a10" stroke-width="3"/><path d="M5.500 9 V1.500 H8.500" fill="none" stroke="#f0e08a" stroke-width="1.400"/><circle cx="5.500" cy="11.500" r="3" fill="none" stroke="#5a4a10" stroke-width="3"/><circle cx="5.500" cy="11.500" r="3" fill="none" stroke="#f0e08a" stroke-width="1.400"/><path d="M9.500 12 L15.500 6 M13.500 8l1.500 1.500" stroke="#333" stroke-width="3"/><path d="M9.500 12 L15.500 6 M13.500 8l1.500 1.500" stroke="#f2f2f2" stroke-width="1.300"/><circle cx="9" cy="12.500" r="2.200" fill="none" stroke="#333" stroke-width="2.600"/><circle cx="9" cy="12.500" r="2.200" fill="none" stroke="#f2f2f2" stroke-width="1.200"/></svg>
<div class="a tool" style="left:1056px;top:878px;width:40px;height:18px;border-radius:0 4px 4px 0"></div>
<div class="a" style="left:1056px;top:878px;width:1px;height:18px;background:#262626;"></div>
<div class="a" style="left:1076px;top:878px;width:1px;height:18px;background:#262626;"></div>
<svg style="left:1058px;top:879px" width="16" height="16" viewBox="0 0 16 16"><path d="M6 10.500 L13.500 3 M11.500 5l2 2" stroke="#333" stroke-width="3.200"/><path d="M6 10.500 L13.500 3 M11.500 5l2 2" stroke="#f2f2f2" stroke-width="1.400"/><circle cx="4.800" cy="11.500" r="2.800" fill="none" stroke="#333" stroke-width="2.800"/><circle cx="4.800" cy="11.500" r="2.800" fill="none" stroke="#f2f2f2" stroke-width="1.300"/></svg>
<svg style="left:1078px;top:879px" width="16" height="16" viewBox="0 0 16 16"><path d="M6 10.500 L13.500 3 M11.500 5l2 2" stroke="#333" stroke-width="3.200"/><path d="M6 10.500 L13.500 3 M11.500 5l2 2" stroke="#f2f2f2" stroke-width="1.400"/><circle cx="4.800" cy="11.500" r="2.800" fill="none" stroke="#333" stroke-width="2.800"/><circle cx="4.800" cy="11.500" r="2.800" fill="none" stroke="#f2f2f2" stroke-width="1.300"/><path d="M2.500 2.500L13.500 14" stroke="#e02828" stroke-width="2"/></svg>
<div class="a" style="left:0px;top:26px;width:1600px;height:1px;background:#0a0a0a;"></div>
<svg style="left:0px;top:13px" width="14" height="14" viewBox="0 0 14 14"><path d="M0 1.500L11.500 13H0z" fill="#acacac"/><path d="M0 1.500L11.500 13M0 5.750L7.250 13M0 10L3 13" stroke="#1e1e1e" stroke-width="1.300"/></svg>
<svg style="left:0px;top:803px" width="14" height="14" viewBox="0 0 14 14"><path d="M0 1.500L11.500 13H0z" fill="#acacac"/><path d="M0 1.500L11.500 13M0 5.750L7.250 13M0 10L3 13" stroke="#1e1e1e" stroke-width="1.300"/></svg>
<svg style="left:0px;top:887px" width="14" height="14" viewBox="0 0 14 14"><path d="M0 1.500L11.500 13H0z" fill="#acacac"/><path d="M0 1.500L11.500 13M0 5.750L7.250 13M0 10L3 13" stroke="#1e1e1e" stroke-width="1.300"/></svg>
<svg style="left:1373px;top:27px" width="14" height="14" viewBox="0 0 14 14"><path d="M2.500 0L14 11.500V0z" fill="#acacac"/><path d="M2.500 0L14 11.500M6.750 0L14 7.250M11 0L14 3" stroke="#1e1e1e" stroke-width="1.300"/></svg>
<svg style="left:1586px;top:0px" width="14" height="14" viewBox="0 0 14 14"><path d="M2.500 0L14 11.500V0z" fill="#acacac"/><path d="M2.500 0L14 11.500M6.750 0L14 7.250M11 0L14 3" stroke="#1e1e1e" stroke-width="1.300"/></svg>
<svg style="left:1586px;top:27px" width="14" height="14" viewBox="0 0 14 14"><path d="M2.500 0L14 11.500V0z" fill="#acacac"/><path d="M2.500 0L14 11.500M6.750 0L14 7.250M11 0L14 3" stroke="#1e1e1e" stroke-width="1.300"/></svg>
<svg style="left:1586px;top:177px" width="14" height="14" viewBox="0 0 14 14"><path d="M2.500 0L14 11.500V0z" fill="#acacac"/><path d="M2.500 0L14 11.500M6.750 0L14 7.250M11 0L14 3" stroke="#1e1e1e" stroke-width="1.300"/></svg>
<svg style="left:1389px;top:162px" width="14" height="14" viewBox="0 0 14 14"><path d="M0 1.500L11.500 13H0z" fill="#acacac"/><path d="M0 1.500L11.500 13M0 5.750L7.250 13M0 10L3 13" stroke="#1e1e1e" stroke-width="1.300"/></svg>
<svg style="left:1389px;top:887px" width="14" height="14" viewBox="0 0 14 14"><path d="M0 1.500L11.500 13H0z" fill="#acacac"/><path d="M0 1.500L11.500 13M0 5.750L7.250 13M0 10L3 13" stroke="#1e1e1e" stroke-width="1.300"/></svg>
<svg style="left:1373px;top:817px" width="14" height="14" viewBox="0 0 14 14"><path d="M2.500 0L14 11.500V0z" fill="#acacac"/><path d="M2.500 0L14 11.500M6.750 0L14 7.250M11 0L14 3" stroke="#1e1e1e" stroke-width="1.300"/></svg>
</div></body></html>
